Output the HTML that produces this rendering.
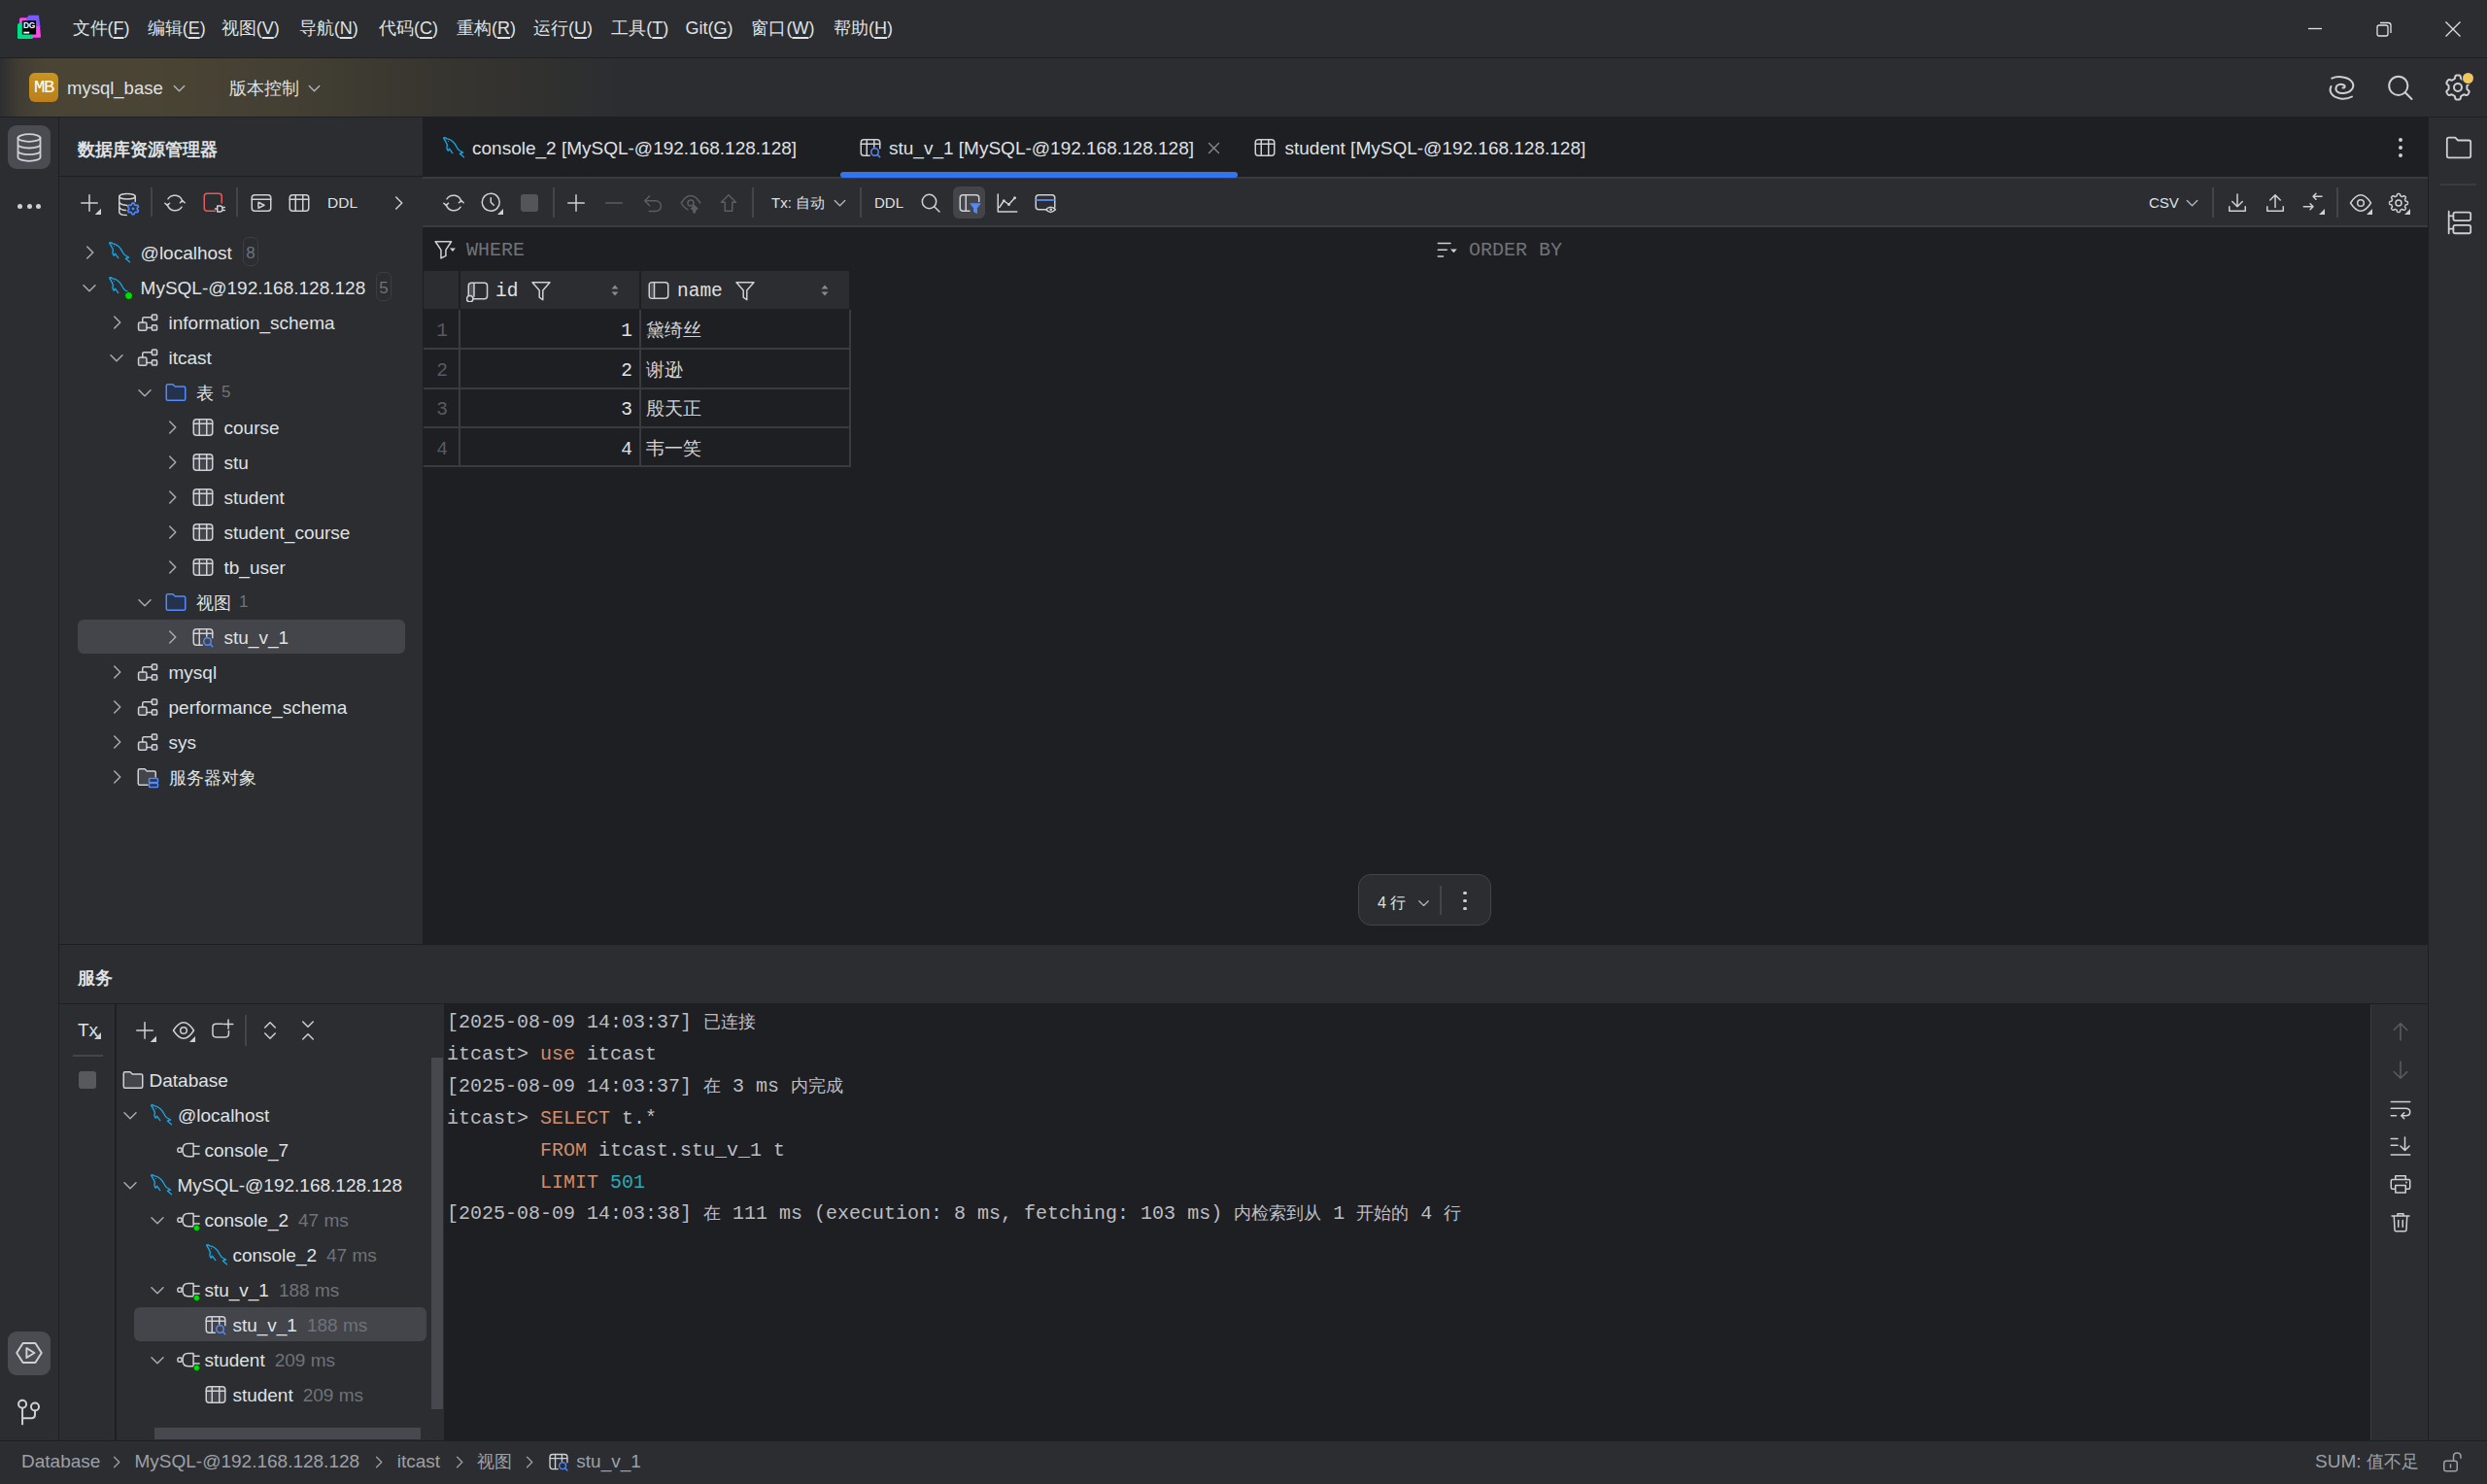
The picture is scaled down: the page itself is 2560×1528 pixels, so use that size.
<!DOCTYPE html><html><head><meta charset="utf-8"><style>html,body{margin:0;padding:0;width:2560px;height:1528px;overflow:hidden;background:#2b2d30;font-family:"Liberation Sans",sans-serif;} u{text-decoration:underline;text-decoration-thickness:1.6px;text-underline-offset:3px}</style></head><body>
<div style="position:absolute;left:0px;top:0px;width:2560px;height:59px;background:#2b2d30;"></div>
<div style="position:absolute;left:0px;top:59px;width:2560px;height:1px;background:#1e1f22;"></div>
<svg style="position:absolute;left:10px;top:8px;" width="40" height="40" viewBox="0 0 40 40" fill="none">
<path d="M11.5 10.2 H17.5 Q19 10.2 19.5 11.5 L21 16 L14 21 L10 21 V11.7 Q10 10.2 11.5 10.2 Z" fill="#ff45ed"/>
<path d="M19.8 7.8 H29.9 L31.5 20 L24 22 L16.5 11.5 Z" fill="#7c59ff"/>
<path d="M23 19 L31 19 L32 29.5 Q32 30.7 30.8 30.7 H24 L20 25 Z" fill="#ff45ed"/>
<path d="M9.5 15.9 H14 L24 28 V30.8 Q24 32 22.8 32 H9.2 Q8 32 8 30.8 V17.4 Q8 15.9 9.5 15.9 Z" fill="#00dd84"/>
<rect x="12.8" y="13.2" width="14.3" height="14.3" fill="#000"/>
<text x="13.9" y="21" font-family="Liberation Sans" font-weight="bold" font-size="8.4" fill="#fff" letter-spacing="-0.3">DG</text>
<rect x="14.3" y="24.7" width="5.9" height="1.8" fill="#fff"/></svg>
<div style="position:absolute;left:74.5px;top:11.0px;line-height:36px;height:36px;font-size:18px;color:#dfe1e5;font-weight:normal;font-family:'Liberation Sans', sans-serif;white-space:pre;">文件(<u>F</u>)</div>
<div style="position:absolute;left:151.7px;top:11.0px;line-height:36px;height:36px;font-size:18px;color:#dfe1e5;font-weight:normal;font-family:'Liberation Sans', sans-serif;white-space:pre;">编辑(<u>E</u>)</div>
<div style="position:absolute;left:227.8px;top:11.0px;line-height:36px;height:36px;font-size:18px;color:#dfe1e5;font-weight:normal;font-family:'Liberation Sans', sans-serif;white-space:pre;">视图(<u>V</u>)</div>
<div style="position:absolute;left:307.7px;top:11.0px;line-height:36px;height:36px;font-size:18px;color:#dfe1e5;font-weight:normal;font-family:'Liberation Sans', sans-serif;white-space:pre;">导航(<u>N</u>)</div>
<div style="position:absolute;left:390px;top:11.0px;line-height:36px;height:36px;font-size:18px;color:#dfe1e5;font-weight:normal;font-family:'Liberation Sans', sans-serif;white-space:pre;">代码(<u>C</u>)</div>
<div style="position:absolute;left:470px;top:11.0px;line-height:36px;height:36px;font-size:18px;color:#dfe1e5;font-weight:normal;font-family:'Liberation Sans', sans-serif;white-space:pre;">重构(<u>R</u>)</div>
<div style="position:absolute;left:549px;top:11.0px;line-height:36px;height:36px;font-size:18px;color:#dfe1e5;font-weight:normal;font-family:'Liberation Sans', sans-serif;white-space:pre;">运行(<u>U</u>)</div>
<div style="position:absolute;left:629.3px;top:11.0px;line-height:36px;height:36px;font-size:18px;color:#dfe1e5;font-weight:normal;font-family:'Liberation Sans', sans-serif;white-space:pre;">工具(<u>T</u>)</div>
<div style="position:absolute;left:705.4px;top:11.0px;line-height:36px;height:36px;font-size:18px;color:#dfe1e5;font-weight:normal;font-family:'Liberation Sans', sans-serif;white-space:pre;">Git(<u>G</u>)</div>
<div style="position:absolute;left:773.4px;top:11.0px;line-height:36px;height:36px;font-size:18px;color:#dfe1e5;font-weight:normal;font-family:'Liberation Sans', sans-serif;white-space:pre;">窗口(<u>W</u>)</div>
<div style="position:absolute;left:858px;top:11.0px;line-height:36px;height:36px;font-size:18px;color:#dfe1e5;font-weight:normal;font-family:'Liberation Sans', sans-serif;white-space:pre;">帮助(<u>H</u>)</div>
<svg style="position:absolute;left:2373px;top:20px;" width="20" height="20" viewBox="0 0 20 20" fill="none"><path d="M3 9.5 H17" stroke="#dfe1e5" stroke-width="1.3"/></svg>
<svg style="position:absolute;left:2443px;top:19px;" width="22" height="22" viewBox="0 0 22 22" fill="none"><rect x="4" y="7" width="11" height="11" rx="2" stroke="#dfe1e5" stroke-width="1.3"/><path d="M7 4.5 H15.5 Q18 4.5 18 7 V15" stroke="#dfe1e5" stroke-width="1.3"/></svg>
<svg style="position:absolute;left:2514px;top:19px;" width="22" height="22" viewBox="0 0 22 22" fill="none"><path d="M3.5 3.5 L18.5 18.5 M18.5 3.5 L3.5 18.5" stroke="#dfe1e5" stroke-width="1.3"/></svg>
<div style="position:absolute;left:0;top:60px;width:2560px;height:60px;background:#2b2d30"></div>
<div style="position:absolute;left:0;top:60px;width:700px;height:60px;background:linear-gradient(90deg, #2d2e30 0px, #3f3c33 18px, #4a4434 45px, #4a4434 150px, #433f33 300px, #37352f 450px, #2b2d30 640px)"></div>
<div style="position:absolute;left:0px;top:120px;width:2560px;height:1px;background:#1e1f22;"></div>
<div style="position:absolute;left:30px;top:75px;width:30px;height:30px;border-radius:6px;background:linear-gradient(180deg,#c9951f,#bb7f1d);color:#fff;font-family:'Liberation Mono',monospace;font-size:19px;line-height:31px;text-align:center;letter-spacing:-1.5px">MB</div>
<div style="position:absolute;left:69px;top:73.0px;line-height:36px;height:36px;font-size:18.5px;color:#dfe1e5;font-weight:normal;font-family:'Liberation Sans', sans-serif;white-space:pre;">mysql_base</div>
<svg style="position:absolute;left:173.5px;top:79.5px;" width="21" height="21" viewBox="0 0 16 16" fill="none"><path d="M4 6.5 L8 10.5 L12 6.5" stroke="#b4b8bf" stroke-width="1" stroke-linecap="round" stroke-linejoin="round"/></svg>
<div style="position:absolute;left:236px;top:73.0px;line-height:36px;height:36px;font-size:18px;color:#dfe1e5;font-weight:normal;font-family:'Liberation Sans', sans-serif;white-space:pre;">版本控制</div>
<svg style="position:absolute;left:312.5px;top:79.5px;" width="21" height="21" viewBox="0 0 16 16" fill="none"><path d="M4 6.5 L8 10.5 L12 6.5" stroke="#b4b8bf" stroke-width="1" stroke-linecap="round" stroke-linejoin="round"/></svg>
<svg style="position:absolute;left:2390px;top:70px;" width="40" height="40" viewBox="0 0 40 40" fill="none"><path d="M10.3 10.6 C16 8 28 8.5 31.5 15 C34 20 30 25.5 22.5 26 C17 26.5 14 24 14.5 20.5 C15 17 19 16 22.5 17.5 C24.5 18.5 24 20.5 21.5 20.5" stroke="#ced0d6" stroke-width="2" stroke-linecap="round" fill="none"/><path d="M9.5 19 C7 24 10 30 19 31.5 C24 32.2 28.5 31 31 29.5" stroke="#ced0d6" stroke-width="2" stroke-linecap="round" fill="none"/></svg>
<svg style="position:absolute;left:2450px;top:70px;" width="40" height="40" viewBox="0 0 40 40" fill="none"><circle cx="18.8" cy="18.3" r="9.6" stroke="#ced0d6" stroke-width="2"/><path d="M25.8 25.3 L32.5 32" stroke="#ced0d6" stroke-width="2" stroke-linecap="round"/></svg>
<svg style="position:absolute;left:2510px;top:70px;" width="40" height="40" viewBox="-2 -2 20 20" fill="none"><path d="M8.00 1.70 L8.25 1.71 L8.49 1.73 L8.74 1.77 L8.97 1.85 L9.19 2.01 L9.35 2.36 L9.45 2.86 L9.54 3.27 L9.66 3.50 L9.81 3.63 L9.97 3.72 L10.14 3.81 L10.30 3.90 L10.46 3.99 L10.61 4.09 L10.77 4.18 L10.94 4.27 L11.14 4.32 L11.44 4.27 L11.89 4.11 L12.35 3.98 L12.68 4.00 L12.91 4.13 L13.08 4.31 L13.23 4.50 L13.37 4.71 L13.50 4.92 L13.61 5.14 L13.71 5.37 L13.79 5.60 L13.82 5.85 L13.73 6.14 L13.44 6.46 L13.05 6.79 L12.80 7.04 L12.71 7.25 L12.69 7.44 L12.69 7.63 L12.70 7.82 L12.70 8.00 L12.70 8.18 L12.69 8.37 L12.69 8.56 L12.71 8.75 L12.80 8.96 L13.05 9.21 L13.44 9.54 L13.73 9.86 L13.82 10.15 L13.79 10.40 L13.71 10.63 L13.61 10.86 L13.50 11.08 L13.37 11.29 L13.23 11.50 L13.08 11.69 L12.91 11.87 L12.68 12.00 L12.35 12.02 L11.89 11.89 L11.44 11.73 L11.14 11.68 L10.94 11.73 L10.77 11.82 L10.61 11.91 L10.46 12.01 L10.30 12.10 L10.14 12.19 L9.97 12.28 L9.81 12.37 L9.66 12.50 L9.54 12.73 L9.45 13.14 L9.35 13.64 L9.19 13.99 L8.97 14.15 L8.74 14.23 L8.49 14.27 L8.25 14.29 L8.00 14.30 L7.75 14.29 L7.51 14.27 L7.26 14.23 L7.03 14.15 L6.81 13.99 L6.65 13.64 L6.55 13.14 L6.46 12.73 L6.34 12.50 L6.19 12.37 L6.03 12.28 L5.86 12.19 L5.70 12.10 L5.54 12.01 L5.39 11.91 L5.23 11.82 L5.06 11.73 L4.86 11.68 L4.56 11.73 L4.11 11.89 L3.65 12.02 L3.32 12.00 L3.09 11.87 L2.92 11.69 L2.77 11.50 L2.63 11.29 L2.50 11.08 L2.39 10.86 L2.29 10.63 L2.21 10.40 L2.18 10.15 L2.27 9.86 L2.56 9.54 L2.95 9.21 L3.20 8.96 L3.29 8.75 L3.31 8.56 L3.31 8.37 L3.30 8.18 L3.30 8.00 L3.30 7.82 L3.31 7.63 L3.31 7.44 L3.29 7.25 L3.20 7.04 L2.95 6.79 L2.56 6.46 L2.27 6.14 L2.18 5.85 L2.21 5.60 L2.29 5.37 L2.39 5.14 L2.50 4.92 L2.63 4.71 L2.77 4.50 L2.92 4.31 L3.09 4.13 L3.32 4.00 L3.65 3.98 L4.11 4.11 L4.56 4.27 L4.86 4.32 L5.06 4.27 L5.23 4.18 L5.39 4.09 L5.54 3.99 L5.70 3.90 L5.86 3.81 L6.03 3.72 L6.19 3.63 L6.34 3.50 L6.46 3.27 L6.55 2.86 L6.65 2.36 L6.81 2.01 L7.03 1.85 L7.26 1.77 L7.51 1.73 L7.75 1.71 Z" stroke="#ced0d6" stroke-width="1.0" stroke-linecap="round" stroke-linejoin="round"/><circle cx="8" cy="8" r="2.0" stroke="#ced0d6" stroke-width="1.0" stroke-linecap="round" stroke-linejoin="round"/></svg>
<div style="position:absolute;left:2533.5px;top:73.5px;width:13.6px;height:13.6px;border-radius:8px;background:#2b2d30"></div>
<div style="position:absolute;left:2535px;top:75px;width:10.6px;height:10.6px;border-radius:6px;background:#f2c55c"></div>
<div style="position:absolute;left:60px;top:121px;width:1px;height:1362px;background:#1e1f22;"></div>
<div style="position:absolute;left:8px;top:129px;width:44px;height:45px;background:#4b4c51;border-radius:9px"></div>
<svg style="position:absolute;left:16px;top:136px;" width="28" height="32" viewBox="0 0 28 32" fill="none"><ellipse cx="14" cy="6" rx="11.5" ry="3.8" stroke="#ced0d6" stroke-width="1.8" stroke-linecap="round" stroke-linejoin="round"/><path d="M2.5 6 V26 M25.5 6 V26 M2.5 12.7 A11.5 3.8 0 0 0 25.5 12.7 M2.5 19.4 A11.5 3.8 0 0 0 25.5 19.4 M2.5 26 A11.5 3.8 0 0 0 25.5 26" stroke="#ced0d6" stroke-width="1.8" stroke-linecap="round" stroke-linejoin="round"/></svg>
<div style="position:absolute;left:17.7px;top:209.5px;width:5px;height:5px;border-radius:3px;background:#ced0d6"></div>
<div style="position:absolute;left:27.5px;top:209.5px;width:5px;height:5px;border-radius:3px;background:#ced0d6"></div>
<div style="position:absolute;left:37.1px;top:209.5px;width:5px;height:5px;border-radius:3px;background:#ced0d6"></div>
<div style="position:absolute;left:8px;top:1371px;width:44px;height:45px;background:#4b4c51;border-radius:9px"></div>
<svg style="position:absolute;left:15.0px;top:1378.0px;" width="30" height="30" viewBox="0 0 16 16" fill="none"><path d="M4.6 2.7 H11.4 L14.8 8 L11.4 13.3 H4.6 L1.2 8 Z" stroke="#ced0d6" stroke-width="1.05" stroke-linecap="round" stroke-linejoin="round"/><path d="M6.6 5.4 L10.9 8 L6.6 10.6 Z" stroke="#ced0d6" stroke-width="1.05" stroke-linecap="round" stroke-linejoin="round"/></svg>
<svg style="position:absolute;left:15.0px;top:1439.0px;" width="30" height="30" viewBox="0 0 16 16" fill="none"><circle cx="4.3" cy="3.6" r="2.15" stroke="#ced0d6" stroke-width="1.05" stroke-linecap="round" stroke-linejoin="round"/><circle cx="11.2" cy="5.1" r="2.15" stroke="#ced0d6" stroke-width="1.05" stroke-linecap="round" stroke-linejoin="round"/><path d="M4.3 5.75 V14.6 M4.3 11.3 H9.2 Q11.2 11.3 11.2 9.3 V7.25" stroke="#ced0d6" stroke-width="1.05" stroke-linecap="round" stroke-linejoin="round"/></svg>
<div style="position:absolute;left:61px;top:181px;width:374px;height:1px;background:#1e1f22;"></div>
<div style="position:absolute;left:80px;top:135.5px;line-height:36px;height:36px;font-size:18px;color:#dfe1e5;font-weight:bold;font-family:'Liberation Sans', sans-serif;white-space:pre;">数据库资源管理器</div>
<svg style="position:absolute;left:79.5px;top:197.0px;" width="24" height="24" viewBox="0 0 16 16" fill="none"><path d="M8 2.5 V13.5 M2.5 8 H13.5" stroke="#ced0d6" stroke-width="1" stroke-linecap="round" stroke-linejoin="round"/><path d="M16 11.8 V16 H11.8 Z" fill="#ced0d6"/></svg>
<svg style="position:absolute;left:120.0px;top:197.0px;overflow:visible" width="24" height="24" viewBox="0 0 16 16" fill="none"><ellipse cx="7.33" cy="3.5" rx="5.5" ry="1.9" stroke="#ced0d6" stroke-width="1" stroke-linecap="round" stroke-linejoin="round"/><path d="M1.83 3.5 V14.5 M12.83 3.5 V7 M1.83 7.3 Q2.5 9.2 7.3 9.6 M1.83 10.8 Q2.5 12.7 6.3 13 M1.83 14.5 Q2.5 16.3 6.8 16.4" stroke="#ced0d6" stroke-width="1" stroke-linecap="round" stroke-linejoin="round"/><path d="M11.33 8.03 L11.53 8.04 L11.74 8.07 L11.93 8.14 L12.10 8.31 L12.21 8.65 L12.29 8.98 L12.39 9.17 L12.52 9.27 L12.65 9.34 L12.78 9.42 L12.91 9.50 L13.04 9.57 L13.19 9.63 L13.40 9.63 L13.73 9.53 L14.08 9.45 L14.31 9.51 L14.47 9.65 L14.60 9.81 L14.71 9.98 L14.80 10.16 L14.88 10.35 L14.92 10.55 L14.85 10.79 L14.61 11.05 L14.36 11.29 L14.25 11.47 L14.23 11.63 L14.23 11.78 L14.23 11.93 L14.23 12.08 L14.23 12.23 L14.25 12.39 L14.36 12.57 L14.61 12.81 L14.85 13.07 L14.92 13.31 L14.88 13.51 L14.80 13.70 L14.71 13.88 L14.60 14.05 L14.47 14.21 L14.31 14.35 L14.08 14.41 L13.73 14.33 L13.40 14.23 L13.19 14.23 L13.04 14.29 L12.91 14.36 L12.78 14.44 L12.65 14.52 L12.52 14.59 L12.39 14.69 L12.29 14.88 L12.21 15.21 L12.10 15.55 L11.93 15.72 L11.74 15.79 L11.53 15.82 L11.33 15.83 L11.13 15.82 L10.92 15.79 L10.73 15.72 L10.56 15.55 L10.45 15.21 L10.37 14.88 L10.27 14.69 L10.14 14.59 L10.01 14.52 L9.88 14.44 L9.75 14.36 L9.62 14.29 L9.47 14.23 L9.26 14.23 L8.93 14.33 L8.58 14.41 L8.35 14.35 L8.19 14.21 L8.06 14.05 L7.95 13.88 L7.86 13.70 L7.78 13.51 L7.74 13.31 L7.81 13.07 L8.05 12.81 L8.30 12.57 L8.41 12.39 L8.43 12.23 L8.43 12.08 L8.43 11.93 L8.43 11.78 L8.43 11.63 L8.41 11.47 L8.30 11.29 L8.05 11.05 L7.81 10.79 L7.74 10.55 L7.78 10.35 L7.86 10.16 L7.95 9.98 L8.06 9.81 L8.19 9.65 L8.35 9.51 L8.58 9.45 L8.93 9.53 L9.26 9.63 L9.47 9.63 L9.62 9.57 L9.75 9.50 L9.88 9.42 L10.01 9.34 L10.14 9.27 L10.27 9.17 L10.37 8.98 L10.45 8.65 L10.56 8.31 L10.73 8.14 L10.92 8.07 L11.13 8.04 Z" fill="#25324d" stroke="#548af7" stroke-width="1.1" stroke-linejoin="round"/><circle cx="11.33" cy="11.93" r="0.9" fill="#548af7"/></svg>
<div style="position:absolute;left:155px;top:193px;width:2px;height:30px;background:#43454a;"></div>
<svg style="position:absolute;left:168.0px;top:197.0px;" width="24" height="24" viewBox="0 0 16 16" fill="none"><path d="M13.2 7 A5.5 5.5 0 0 0 3.3 5.2 M2.8 9 A5.5 5.5 0 0 0 12.7 10.8" stroke="#ced0d6" stroke-width="1" stroke-linecap="round" stroke-linejoin="round"/><path d="M1.2 8.2 L2.8 9.6 L4.4 8.2 M11.6 7.8 L13.2 6.4 L14.8 7.8" stroke="#ced0d6" stroke-width="1" stroke-linecap="round" stroke-linejoin="round"/></svg>
<svg style="position:absolute;left:208.0px;top:197.0px;" width="24" height="24" viewBox="0 0 16 16" fill="none"><path d="M9 13.5 H3.5 Q1.5 13.5 1.5 11.5 V3.5 Q1.5 1.5 3.5 1.5 H11.5 Q13.5 1.5 13.5 3.5 V8" stroke="#e55b5b" stroke-width="1" stroke-linecap="round"/><path d="M10.5 10 H12.5 Q14 10 14 12 Q14 14 12.5 14 H10.5 Z M9 12 H10.5 M14 11 H15.5 M14 13 H15.5" stroke="#ced0d6" stroke-width="1" stroke-linecap="round" stroke-linejoin="round"/></svg>
<div style="position:absolute;left:243px;top:193px;width:2px;height:30px;background:#43454a;"></div>
<svg style="position:absolute;left:257.0px;top:197.0px;" width="24" height="24" viewBox="0 0 16 16" fill="none"><rect x="1.5" y="2.5" width="13" height="11" rx="2" stroke="#ced0d6" stroke-width="1" stroke-linecap="round" stroke-linejoin="round"/><path d="M1.5 5.5 H14.5" stroke="#ced0d6" stroke-width="1" stroke-linecap="round" stroke-linejoin="round"/><path d="M6 7.5 L10 9.5 L6 11.5 Z" stroke="#ced0d6" stroke-width="1" stroke-linecap="round" stroke-linejoin="round"/></svg>
<svg style="position:absolute;left:296.0px;top:197.0px;" width="24" height="24" viewBox="0 0 16 16" fill="none"><rect x="1.5" y="2.5" width="13" height="11" rx="2" fill="none" stroke="#ced0d6" stroke-width="1" stroke-linecap="round" stroke-linejoin="round"/><path d="M1.5 5.5 H14.5 M5.5 2.5 V13.5 M10.5 2.5 V13.5" stroke="#ced0d6" stroke-width="1" stroke-linecap="round" stroke-linejoin="round"/></svg>
<div style="position:absolute;left:337px;top:191.0px;line-height:36px;height:36px;font-size:15.5px;color:#dfe1e5;font-weight:normal;font-family:'Liberation Sans', sans-serif;white-space:pre;">DDL</div>
<svg style="position:absolute;left:398.0px;top:197.0px;" width="24" height="24" viewBox="0 0 16 16" fill="none"><path d="M6.5 4 L10.5 8 L6.5 12" stroke="#ced0d6" stroke-width="1" stroke-linecap="round" stroke-linejoin="round"/></svg>
<div style="position:absolute;left:80px;top:638px;width:337px;height:35px;background:#43454a;border-radius:6px"></div>
<svg style="position:absolute;left:79.5px;top:248.0px;" width="24" height="24" viewBox="0 0 16 16" fill="none"><path d="M6.5 4 L10.5 8 L6.5 12" stroke="#a8abb0" stroke-width="1" stroke-linecap="round" stroke-linejoin="round"/></svg>
<svg style="position:absolute;left:108.0px;top:244px;" width="30" height="30" viewBox="0 0 30 30" fill="none"><path d="M13.75 21.6 L10.5 17.2 L9.3 19.2 C8 18 7.6 16 8.4 13.2 C7.5 11 6.4 9 4.6 6.1 C5.5 5.3 6.5 5.6 8 6.8 C11 7.2 14 9 16.4 12.3 C18 15 18.5 17.5 21 19 C22.5 19.8 24 20.4 24.6 21.2 L21.4 22.2 L25.5 25.7" stroke="#12a9e9" stroke-width="1.35" stroke-linejoin="round" stroke-linecap="round" fill="none"/><circle cx="9.5" cy="9.5" r="0.6" fill="#12a9e9"/></svg>
<div style="position:absolute;left:144.6px;top:243.0px;line-height:36px;height:36px;font-size:19px;color:#dfe1e5;font-weight:normal;font-family:'Liberation Sans', sans-serif;white-space:pre;">@localhost</div>
<div style="position:absolute;left:250px;top:244px;width:14px;height:28px;border:1.5px solid #3c3e43;border-radius:6px;color:#6f737a;font-size:17px;line-height:31px;text-align:center">8</div>
<svg style="position:absolute;left:79.5px;top:284.0px;" width="24" height="24" viewBox="0 0 16 16" fill="none"><path d="M4 6.5 L8 10.5 L12 6.5" stroke="#a8abb0" stroke-width="1" stroke-linecap="round" stroke-linejoin="round"/></svg>
<svg style="position:absolute;left:108.0px;top:280px;" width="30" height="30" viewBox="0 0 30 30" fill="none"><path d="M13.75 21.6 L10.5 17.2 L9.3 19.2 C8 18 7.6 16 8.4 13.2 C7.5 11 6.4 9 4.6 6.1 C5.5 5.3 6.5 5.6 8 6.8 C11 7.2 14 9 16.4 12.3 C18 15 18.5 17.5 21 19 C22.5 19.8 24 20.4 24.6 21.2 L21.4 22.2 L25.5 25.7" stroke="#12a9e9" stroke-width="1.35" stroke-linejoin="round" stroke-linecap="round" fill="none"/><circle cx="9.5" cy="9.5" r="0.6" fill="#12a9e9"/></svg>
<div style="position:absolute;left:127.89999999999999px;top:300.2px;width:7px;height:7px;border-radius:5px;background:#00e000;border:0.7px solid #1b2a1b"></div>
<div style="position:absolute;left:144.6px;top:279.0px;line-height:36px;height:36px;font-size:19px;color:#dfe1e5;font-weight:normal;font-family:'Liberation Sans', sans-serif;white-space:pre;">MySQL-@192.168.128.128</div>
<div style="position:absolute;left:387px;top:280px;width:14px;height:28px;border:1.5px solid #3c3e43;border-radius:6px;color:#6f737a;font-size:17px;line-height:31px;text-align:center">5</div>
<svg style="position:absolute;left:108.0px;top:320.0px;" width="24" height="24" viewBox="0 0 16 16" fill="none"><path d="M6.5 4 L10.5 8 L6.5 12" stroke="#a8abb0" stroke-width="1" stroke-linecap="round" stroke-linejoin="round"/></svg>
<svg style="position:absolute;left:140.0px;top:320.0px;" width="24" height="24" viewBox="0 0 16 16" fill="none"><rect x="1.7" y="8" width="5.6" height="5.5" rx="1" fill="#43454a" stroke="#ced0d6" stroke-width="1" stroke-linecap="round" stroke-linejoin="round"/><rect x="10.9" y="2.6" width="3.5" height="3.7" rx="0.8" fill="#43454a" stroke="#ced0d6" stroke-width="1" stroke-linecap="round" stroke-linejoin="round"/><rect x="10.9" y="9.8" width="3.5" height="3.6" rx="0.8" fill="#43454a" stroke="#ced0d6" stroke-width="1" stroke-linecap="round" stroke-linejoin="round"/><path d="M4.5 8 V5.5 Q4.5 4.45 5.5 4.45 H10.9 M7.3 11.6 H10.9" stroke="#ced0d6" stroke-width="1" stroke-linecap="round" stroke-linejoin="round"/></svg>
<div style="position:absolute;left:173.5px;top:315.0px;line-height:36px;height:36px;font-size:19px;color:#dfe1e5;font-weight:normal;font-family:'Liberation Sans', sans-serif;white-space:pre;">information_schema</div>
<svg style="position:absolute;left:108.0px;top:356.0px;" width="24" height="24" viewBox="0 0 16 16" fill="none"><path d="M4 6.5 L8 10.5 L12 6.5" stroke="#a8abb0" stroke-width="1" stroke-linecap="round" stroke-linejoin="round"/></svg>
<svg style="position:absolute;left:140.0px;top:356.0px;" width="24" height="24" viewBox="0 0 16 16" fill="none"><rect x="1.7" y="8" width="5.6" height="5.5" rx="1" fill="#43454a" stroke="#ced0d6" stroke-width="1" stroke-linecap="round" stroke-linejoin="round"/><rect x="10.9" y="2.6" width="3.5" height="3.7" rx="0.8" fill="#43454a" stroke="#ced0d6" stroke-width="1" stroke-linecap="round" stroke-linejoin="round"/><rect x="10.9" y="9.8" width="3.5" height="3.6" rx="0.8" fill="#43454a" stroke="#ced0d6" stroke-width="1" stroke-linecap="round" stroke-linejoin="round"/><path d="M4.5 8 V5.5 Q4.5 4.45 5.5 4.45 H10.9 M7.3 11.6 H10.9" stroke="#ced0d6" stroke-width="1" stroke-linecap="round" stroke-linejoin="round"/></svg>
<div style="position:absolute;left:173.5px;top:351.0px;line-height:36px;height:36px;font-size:19px;color:#dfe1e5;font-weight:normal;font-family:'Liberation Sans', sans-serif;white-space:pre;">itcast</div>
<svg style="position:absolute;left:136.5px;top:392.0px;" width="24" height="24" viewBox="0 0 16 16" fill="none"><path d="M4 6.5 L8 10.5 L12 6.5" stroke="#a8abb0" stroke-width="1" stroke-linecap="round" stroke-linejoin="round"/></svg>
<svg style="position:absolute;left:168.5px;top:392.0px;" width="24" height="24" viewBox="0 0 16 16" fill="none"><path d="M1.5 3.5 Q1.5 2.5 2.5 2.5 H6 L7.5 4 H13.5 Q14.5 4 14.5 5 V12.5 Q14.5 13.5 13.5 13.5 H2.5 Q1.5 13.5 1.5 12.5 Z" fill="#25324d" stroke="#548af7" stroke-width="1" stroke-linejoin="round"/></svg>
<div style="position:absolute;left:201.5px;top:387.0px;line-height:36px;height:36px;font-size:18px;color:#dfe1e5;font-weight:normal;font-family:'Liberation Sans', sans-serif;white-space:pre;">表</div>
<div style="position:absolute;left:228px;top:386.0px;line-height:36px;height:36px;font-size:17px;color:#6f737a;font-weight:normal;font-family:'Liberation Sans', sans-serif;white-space:pre;">5</div>
<svg style="position:absolute;left:165.0px;top:428.0px;" width="24" height="24" viewBox="0 0 16 16" fill="none"><path d="M6.5 4 L10.5 8 L6.5 12" stroke="#a8abb0" stroke-width="1" stroke-linecap="round" stroke-linejoin="round"/></svg>
<svg style="position:absolute;left:197.0px;top:428.0px;" width="24" height="24" viewBox="0 0 16 16" fill="none"><rect x="1.5" y="2.5" width="13" height="11" rx="2" fill="#43454a" stroke="#ced0d6" stroke-width="1" stroke-linecap="round" stroke-linejoin="round"/><path d="M1.5 5.5 H14.5 M5.5 2.5 V13.5 M10.5 2.5 V13.5" stroke="#ced0d6" stroke-width="1" stroke-linecap="round" stroke-linejoin="round"/></svg>
<div style="position:absolute;left:230.5px;top:423.0px;line-height:36px;height:36px;font-size:19px;color:#dfe1e5;font-weight:normal;font-family:'Liberation Sans', sans-serif;white-space:pre;">course</div>
<svg style="position:absolute;left:165.0px;top:464.0px;" width="24" height="24" viewBox="0 0 16 16" fill="none"><path d="M6.5 4 L10.5 8 L6.5 12" stroke="#a8abb0" stroke-width="1" stroke-linecap="round" stroke-linejoin="round"/></svg>
<svg style="position:absolute;left:197.0px;top:464.0px;" width="24" height="24" viewBox="0 0 16 16" fill="none"><rect x="1.5" y="2.5" width="13" height="11" rx="2" fill="#43454a" stroke="#ced0d6" stroke-width="1" stroke-linecap="round" stroke-linejoin="round"/><path d="M1.5 5.5 H14.5 M5.5 2.5 V13.5 M10.5 2.5 V13.5" stroke="#ced0d6" stroke-width="1" stroke-linecap="round" stroke-linejoin="round"/></svg>
<div style="position:absolute;left:230.5px;top:459.0px;line-height:36px;height:36px;font-size:19px;color:#dfe1e5;font-weight:normal;font-family:'Liberation Sans', sans-serif;white-space:pre;">stu</div>
<svg style="position:absolute;left:165.0px;top:500.0px;" width="24" height="24" viewBox="0 0 16 16" fill="none"><path d="M6.5 4 L10.5 8 L6.5 12" stroke="#a8abb0" stroke-width="1" stroke-linecap="round" stroke-linejoin="round"/></svg>
<svg style="position:absolute;left:197.0px;top:500.0px;" width="24" height="24" viewBox="0 0 16 16" fill="none"><rect x="1.5" y="2.5" width="13" height="11" rx="2" fill="#43454a" stroke="#ced0d6" stroke-width="1" stroke-linecap="round" stroke-linejoin="round"/><path d="M1.5 5.5 H14.5 M5.5 2.5 V13.5 M10.5 2.5 V13.5" stroke="#ced0d6" stroke-width="1" stroke-linecap="round" stroke-linejoin="round"/></svg>
<div style="position:absolute;left:230.5px;top:495.0px;line-height:36px;height:36px;font-size:19px;color:#dfe1e5;font-weight:normal;font-family:'Liberation Sans', sans-serif;white-space:pre;">student</div>
<svg style="position:absolute;left:165.0px;top:536.0px;" width="24" height="24" viewBox="0 0 16 16" fill="none"><path d="M6.5 4 L10.5 8 L6.5 12" stroke="#a8abb0" stroke-width="1" stroke-linecap="round" stroke-linejoin="round"/></svg>
<svg style="position:absolute;left:197.0px;top:536.0px;" width="24" height="24" viewBox="0 0 16 16" fill="none"><rect x="1.5" y="2.5" width="13" height="11" rx="2" fill="#43454a" stroke="#ced0d6" stroke-width="1" stroke-linecap="round" stroke-linejoin="round"/><path d="M1.5 5.5 H14.5 M5.5 2.5 V13.5 M10.5 2.5 V13.5" stroke="#ced0d6" stroke-width="1" stroke-linecap="round" stroke-linejoin="round"/></svg>
<div style="position:absolute;left:230.5px;top:531.0px;line-height:36px;height:36px;font-size:19px;color:#dfe1e5;font-weight:normal;font-family:'Liberation Sans', sans-serif;white-space:pre;">student_course</div>
<svg style="position:absolute;left:165.0px;top:572.0px;" width="24" height="24" viewBox="0 0 16 16" fill="none"><path d="M6.5 4 L10.5 8 L6.5 12" stroke="#a8abb0" stroke-width="1" stroke-linecap="round" stroke-linejoin="round"/></svg>
<svg style="position:absolute;left:197.0px;top:572.0px;" width="24" height="24" viewBox="0 0 16 16" fill="none"><rect x="1.5" y="2.5" width="13" height="11" rx="2" fill="#43454a" stroke="#ced0d6" stroke-width="1" stroke-linecap="round" stroke-linejoin="round"/><path d="M1.5 5.5 H14.5 M5.5 2.5 V13.5 M10.5 2.5 V13.5" stroke="#ced0d6" stroke-width="1" stroke-linecap="round" stroke-linejoin="round"/></svg>
<div style="position:absolute;left:230.5px;top:567.0px;line-height:36px;height:36px;font-size:19px;color:#dfe1e5;font-weight:normal;font-family:'Liberation Sans', sans-serif;white-space:pre;">tb_user</div>
<svg style="position:absolute;left:136.5px;top:608.0px;" width="24" height="24" viewBox="0 0 16 16" fill="none"><path d="M4 6.5 L8 10.5 L12 6.5" stroke="#a8abb0" stroke-width="1" stroke-linecap="round" stroke-linejoin="round"/></svg>
<svg style="position:absolute;left:168.5px;top:608.0px;" width="24" height="24" viewBox="0 0 16 16" fill="none"><path d="M1.5 3.5 Q1.5 2.5 2.5 2.5 H6 L7.5 4 H13.5 Q14.5 4 14.5 5 V12.5 Q14.5 13.5 13.5 13.5 H2.5 Q1.5 13.5 1.5 12.5 Z" fill="#25324d" stroke="#548af7" stroke-width="1" stroke-linejoin="round"/></svg>
<div style="position:absolute;left:201.5px;top:603.0px;line-height:36px;height:36px;font-size:18px;color:#dfe1e5;font-weight:normal;font-family:'Liberation Sans', sans-serif;white-space:pre;">视图</div>
<div style="position:absolute;left:246px;top:602.0px;line-height:36px;height:36px;font-size:17px;color:#6f737a;font-weight:normal;font-family:'Liberation Sans', sans-serif;white-space:pre;">1</div>
<svg style="position:absolute;left:165.0px;top:644.0px;" width="24" height="24" viewBox="0 0 16 16" fill="none"><path d="M6.5 4 L10.5 8 L6.5 12" stroke="#a8abb0" stroke-width="1" stroke-linecap="round" stroke-linejoin="round"/></svg>
<svg style="position:absolute;left:197.0px;top:644.0px;" width="24" height="24" viewBox="0 0 16 16" fill="none"><path d="M7.5 13.5 H3.5 Q1.5 13.5 1.5 11.5 V4.5 Q1.5 2.5 3.5 2.5 H12.5 Q14.5 2.5 14.5 4.5 V8.5" fill="#43454a" stroke="#ced0d6" stroke-width="1" stroke-linecap="round" stroke-linejoin="round"/><path d="M1.5 5.5 H14.5 M5.5 2.5 V13.5 M10.5 2.5 V7.5" stroke="#ced0d6" stroke-width="1" stroke-linecap="round" stroke-linejoin="round"/><circle cx="11" cy="11" r="2.5" fill="#43454a" stroke="#548af7" stroke-width="1"/><path d="M12.9 12.9 L14.5 14.5" stroke="#548af7" stroke-width="1" stroke-linecap="round"/></svg>
<div style="position:absolute;left:230.5px;top:639.0px;line-height:36px;height:36px;font-size:19px;color:#dfe1e5;font-weight:normal;font-family:'Liberation Sans', sans-serif;white-space:pre;">stu_v_1</div>
<svg style="position:absolute;left:108.0px;top:680.0px;" width="24" height="24" viewBox="0 0 16 16" fill="none"><path d="M6.5 4 L10.5 8 L6.5 12" stroke="#a8abb0" stroke-width="1" stroke-linecap="round" stroke-linejoin="round"/></svg>
<svg style="position:absolute;left:140.0px;top:680.0px;" width="24" height="24" viewBox="0 0 16 16" fill="none"><rect x="1.7" y="8" width="5.6" height="5.5" rx="1" fill="#43454a" stroke="#ced0d6" stroke-width="1" stroke-linecap="round" stroke-linejoin="round"/><rect x="10.9" y="2.6" width="3.5" height="3.7" rx="0.8" fill="#43454a" stroke="#ced0d6" stroke-width="1" stroke-linecap="round" stroke-linejoin="round"/><rect x="10.9" y="9.8" width="3.5" height="3.6" rx="0.8" fill="#43454a" stroke="#ced0d6" stroke-width="1" stroke-linecap="round" stroke-linejoin="round"/><path d="M4.5 8 V5.5 Q4.5 4.45 5.5 4.45 H10.9 M7.3 11.6 H10.9" stroke="#ced0d6" stroke-width="1" stroke-linecap="round" stroke-linejoin="round"/></svg>
<div style="position:absolute;left:173.5px;top:675.0px;line-height:36px;height:36px;font-size:19px;color:#dfe1e5;font-weight:normal;font-family:'Liberation Sans', sans-serif;white-space:pre;">mysql</div>
<svg style="position:absolute;left:108.0px;top:716.0px;" width="24" height="24" viewBox="0 0 16 16" fill="none"><path d="M6.5 4 L10.5 8 L6.5 12" stroke="#a8abb0" stroke-width="1" stroke-linecap="round" stroke-linejoin="round"/></svg>
<svg style="position:absolute;left:140.0px;top:716.0px;" width="24" height="24" viewBox="0 0 16 16" fill="none"><rect x="1.7" y="8" width="5.6" height="5.5" rx="1" fill="#43454a" stroke="#ced0d6" stroke-width="1" stroke-linecap="round" stroke-linejoin="round"/><rect x="10.9" y="2.6" width="3.5" height="3.7" rx="0.8" fill="#43454a" stroke="#ced0d6" stroke-width="1" stroke-linecap="round" stroke-linejoin="round"/><rect x="10.9" y="9.8" width="3.5" height="3.6" rx="0.8" fill="#43454a" stroke="#ced0d6" stroke-width="1" stroke-linecap="round" stroke-linejoin="round"/><path d="M4.5 8 V5.5 Q4.5 4.45 5.5 4.45 H10.9 M7.3 11.6 H10.9" stroke="#ced0d6" stroke-width="1" stroke-linecap="round" stroke-linejoin="round"/></svg>
<div style="position:absolute;left:173.5px;top:711.0px;line-height:36px;height:36px;font-size:19px;color:#dfe1e5;font-weight:normal;font-family:'Liberation Sans', sans-serif;white-space:pre;">performance_schema</div>
<svg style="position:absolute;left:108.0px;top:752.0px;" width="24" height="24" viewBox="0 0 16 16" fill="none"><path d="M6.5 4 L10.5 8 L6.5 12" stroke="#a8abb0" stroke-width="1" stroke-linecap="round" stroke-linejoin="round"/></svg>
<svg style="position:absolute;left:140.0px;top:752.0px;" width="24" height="24" viewBox="0 0 16 16" fill="none"><rect x="1.7" y="8" width="5.6" height="5.5" rx="1" fill="#43454a" stroke="#ced0d6" stroke-width="1" stroke-linecap="round" stroke-linejoin="round"/><rect x="10.9" y="2.6" width="3.5" height="3.7" rx="0.8" fill="#43454a" stroke="#ced0d6" stroke-width="1" stroke-linecap="round" stroke-linejoin="round"/><rect x="10.9" y="9.8" width="3.5" height="3.6" rx="0.8" fill="#43454a" stroke="#ced0d6" stroke-width="1" stroke-linecap="round" stroke-linejoin="round"/><path d="M4.5 8 V5.5 Q4.5 4.45 5.5 4.45 H10.9 M7.3 11.6 H10.9" stroke="#ced0d6" stroke-width="1" stroke-linecap="round" stroke-linejoin="round"/></svg>
<div style="position:absolute;left:173.5px;top:747.0px;line-height:36px;height:36px;font-size:19px;color:#dfe1e5;font-weight:normal;font-family:'Liberation Sans', sans-serif;white-space:pre;">sys</div>
<svg style="position:absolute;left:108.0px;top:788.0px;" width="24" height="24" viewBox="0 0 16 16" fill="none"><path d="M6.5 4 L10.5 8 L6.5 12" stroke="#a8abb0" stroke-width="1" stroke-linecap="round" stroke-linejoin="round"/></svg>
<svg style="position:absolute;left:140.0px;top:788.0px;" width="24" height="24" viewBox="0 0 16 16" fill="none"><path d="M8 13.5 H2.5 Q1.5 13.5 1.5 12.5 V3.5 Q1.5 2.5 2.5 2.5 H6 L7.5 4 H12.5 Q13.5 4 13.5 5 V8" fill="#43454a" stroke="#ced0d6" stroke-width="1" stroke-linecap="round" stroke-linejoin="round"/><rect x="9" y="9" width="6" height="2.6" rx="0.5" fill="#25324d" stroke="#548af7" stroke-width="1"/><rect x="9" y="12.4" width="6" height="2.6" rx="0.5" fill="#25324d" stroke="#548af7" stroke-width="1"/></svg>
<div style="position:absolute;left:173.5px;top:783.0px;line-height:36px;height:36px;font-size:18px;color:#dfe1e5;font-weight:normal;font-family:'Liberation Sans', sans-serif;white-space:pre;">服务器对象</div>
<div style="position:absolute;left:435px;top:121px;width:2065px;height:852px;background:#1e1f22;"></div>
<div style="position:absolute;left:435px;top:182px;width:2065px;height:2px;background:#393b40;"></div>
<div style="position:absolute;left:435px;top:184px;width:2065px;height:48px;background:#2b2d30;"></div>
<div style="position:absolute;left:435px;top:232px;width:2065px;height:2px;background:#393b40;"></div>
<svg style="position:absolute;left:451.5px;top:136px;" width="30" height="30" viewBox="0 0 30 30" fill="none"><path d="M13.75 21.6 L10.5 17.2 L9.3 19.2 C8 18 7.6 16 8.4 13.2 C7.5 11 6.4 9 4.6 6.1 C5.5 5.3 6.5 5.6 8 6.8 C11 7.2 14 9 16.4 12.3 C18 15 18.5 17.5 21 19 C22.5 19.8 24 20.4 24.6 21.2 L21.4 22.2 L25.5 25.7" stroke="#12a9e9" stroke-width="1.35" stroke-linejoin="round" stroke-linecap="round" fill="none"/><circle cx="9.5" cy="9.5" r="0.6" fill="#12a9e9"/></svg>
<div style="position:absolute;left:486px;top:135.0px;line-height:36px;height:36px;font-size:19px;color:#dfe1e5;font-weight:normal;font-family:'Liberation Sans', sans-serif;white-space:pre;">console_2 [MySQL-@192.168.128.128]</div>
<svg style="position:absolute;left:884.0px;top:140.0px;" width="24" height="24" viewBox="0 0 16 16" fill="none"><path d="M7.5 13.5 H3.5 Q1.5 13.5 1.5 11.5 V4.5 Q1.5 2.5 3.5 2.5 H12.5 Q14.5 2.5 14.5 4.5 V8.5" fill="none" stroke="#ced0d6" stroke-width="1" stroke-linecap="round" stroke-linejoin="round"/><path d="M1.5 5.5 H14.5 M5.5 2.5 V13.5 M10.5 2.5 V7.5" stroke="#ced0d6" stroke-width="1" stroke-linecap="round" stroke-linejoin="round"/><circle cx="11" cy="11" r="2.5" fill="none" stroke="#548af7" stroke-width="1"/><path d="M12.9 12.9 L14.5 14.5" stroke="#548af7" stroke-width="1" stroke-linecap="round"/></svg>
<div style="position:absolute;left:915px;top:135.0px;line-height:36px;height:36px;font-size:19px;color:#dfe1e5;font-weight:normal;font-family:'Liberation Sans', sans-serif;white-space:pre;">stu_v_1 [MySQL-@192.168.128.128]</div>
<svg style="position:absolute;left:1240px;top:143px;" width="19" height="19" viewBox="0 0 19 19" fill="none"><path d="M4.5 4.5 L14.5 14.5 M14.5 4.5 L4.5 14.5" stroke="#868a91" stroke-width="1.4" stroke-linecap="round"/></svg>
<div style="position:absolute;left:865px;top:177px;width:409px;height:6px;background:#3574f0;border-radius:3px"></div>
<svg style="position:absolute;left:1290.0px;top:140.0px;" width="24" height="24" viewBox="0 0 16 16" fill="none"><rect x="1.5" y="2.5" width="13" height="11" rx="2" fill="none" stroke="#ced0d6" stroke-width="1" stroke-linecap="round" stroke-linejoin="round"/><path d="M1.5 5.5 H14.5 M5.5 2.5 V13.5 M10.5 2.5 V13.5" stroke="#ced0d6" stroke-width="1" stroke-linecap="round" stroke-linejoin="round"/></svg>
<div style="position:absolute;left:1322.5px;top:135.0px;line-height:36px;height:36px;font-size:19px;color:#dfe1e5;font-weight:normal;font-family:'Liberation Sans', sans-serif;white-space:pre;">student [MySQL-@192.168.128.128]</div>
<div style="position:absolute;left:2469.1px;top:142.1px;width:3.8px;height:3.8px;border-radius:3px;background:#ced0d6"></div>
<div style="position:absolute;left:2469.1px;top:150.1px;width:3.8px;height:3.8px;border-radius:3px;background:#ced0d6"></div>
<div style="position:absolute;left:2469.1px;top:158.1px;width:3.8px;height:3.8px;border-radius:3px;background:#ced0d6"></div>
<svg style="position:absolute;left:454.5px;top:196.5px;" width="24" height="24" viewBox="0 0 16 16" fill="none"><path d="M13.2 7 A5.5 5.5 0 0 0 3.3 5.2 M2.8 9 A5.5 5.5 0 0 0 12.7 10.8" stroke="#ced0d6" stroke-width="1" stroke-linecap="round" stroke-linejoin="round"/><path d="M1.2 8.2 L2.8 9.6 L4.4 8.2 M11.6 7.8 L13.2 6.4 L14.8 7.8" stroke="#ced0d6" stroke-width="1" stroke-linecap="round" stroke-linejoin="round"/></svg>
<svg style="position:absolute;left:494.0px;top:196.5px;" width="24" height="24" viewBox="0 0 16 16" fill="none"><circle cx="7.5" cy="7.5" r="6" stroke="#ced0d6" stroke-width="1" stroke-linecap="round" stroke-linejoin="round"/><path d="M7.5 4.5 V7.5 L9.5 9.5" stroke="#ced0d6" stroke-width="1" stroke-linecap="round" stroke-linejoin="round"/><path d="M16 12 V16 H12 Z" fill="#ced0d6"/></svg>
<div style="position:absolute;left:536px;top:200px;width:18px;height:18px;background:#535559;border-radius:3px"></div>
<div style="position:absolute;left:569px;top:193px;width:2px;height:31px;background:#43454a;"></div>
<svg style="position:absolute;left:581.0px;top:196.5px;" width="24" height="24" viewBox="0 0 16 16" fill="none"><path d="M8 2.5 V13.5 M2.5 8 H13.5" stroke="#ced0d6" stroke-width="1" stroke-linecap="round" stroke-linejoin="round"/></svg>
<svg style="position:absolute;left:620.4px;top:196.5px;" width="24" height="24" viewBox="0 0 16 16" fill="none"><path d="M2.5 8 H13.5" stroke="#5a5d63" stroke-width="1" stroke-linecap="round" stroke-linejoin="round"/></svg>
<svg style="position:absolute;left:660.0px;top:196.5px;" width="24" height="24" viewBox="0 0 16 16" fill="none"><path d="M2.5 6.5 H10 A3.6 3.6 0 0 1 10 13.7 H5.5 M5.8 3.2 L2.5 6.5 L5.8 9.8" stroke="#5a5d63" stroke-width="1" stroke-linecap="round" stroke-linejoin="round"/></svg>
<svg style="position:absolute;left:698.7px;top:196.5px;" width="24" height="24" viewBox="0 0 16 16" fill="none"><path d="M1.5 8 Q4.5 3 8 3 Q11.5 3 14.5 8 M1.5 8 Q3.5 11.5 6 12.5" stroke="#5a5d63" stroke-width="1" stroke-linecap="round" stroke-linejoin="round"/><circle cx="8" cy="8" r="2" stroke="#5a5d63" stroke-width="1" stroke-linecap="round" stroke-linejoin="round"/><path d="M10.5 15 V11 M8.5 12.5 L10.5 10.5 L12.5 12.5" stroke="#5a5d63" stroke-width="2"/></svg>
<svg style="position:absolute;left:738.0px;top:196.5px;" width="24" height="24" viewBox="0 0 16 16" fill="none"><path d="M8 2.5 L3 7.5 H5.5 V13.5 H10.5 V7.5 H13 Z" stroke="#5a5d63" stroke-width="1" stroke-linecap="round" stroke-linejoin="round"/></svg>
<div style="position:absolute;left:774px;top:193px;width:2px;height:31px;background:#43454a;"></div>
<div style="position:absolute;left:794px;top:190.5px;line-height:36px;height:36px;font-size:15px;color:#dfe1e5;font-weight:normal;font-family:'Liberation Sans', sans-serif;white-space:pre;">Tx: 自动</div>
<svg style="position:absolute;left:853.5px;top:198.0px;" width="21" height="21" viewBox="0 0 16 16" fill="none"><path d="M4 6.5 L8 10.5 L12 6.5" stroke="#b4b8bf" stroke-width="1" stroke-linecap="round" stroke-linejoin="round"/></svg>
<div style="position:absolute;left:885px;top:193px;width:2px;height:31px;background:#43454a;"></div>
<div style="position:absolute;left:900px;top:190.5px;line-height:36px;height:36px;font-size:15px;color:#dfe1e5;font-weight:normal;font-family:'Liberation Sans', sans-serif;white-space:pre;">DDL</div>
<svg style="position:absolute;left:946.0px;top:196.5px;" width="24" height="24" viewBox="0 0 16 16" fill="none"><circle cx="7" cy="7" r="4.8" stroke="#ced0d6" stroke-width="1" stroke-linecap="round" stroke-linejoin="round"/><path d="M10.5 10.5 L14 14" stroke="#ced0d6" stroke-width="1" stroke-linecap="round" stroke-linejoin="round"/></svg>
<div style="position:absolute;left:981px;top:192px;width:33px;height:33px;background:#43454a;border-radius:6px"></div>
<svg style="position:absolute;left:985.5px;top:196.5px;" width="24" height="24" viewBox="0 0 16 16" fill="none"><path d="M8 13.5 H3.5 Q1.5 13.5 1.5 11.5 V4.5 Q1.5 2.5 3.5 2.5 H12.5 Q14.5 2.5 14.5 4.5 V7" stroke="#ced0d6" stroke-width="1" stroke-linecap="round" stroke-linejoin="round"/><path d="M5.5 2.5 V13.5" stroke="#ced0d6" stroke-width="1" stroke-linecap="round" stroke-linejoin="round"/><path d="M8.5 8.5 H15.5 L13 11.5 V15 L11 14 V11.5 Z" fill="#548af7" stroke="#548af7" stroke-width="0.6" stroke-linejoin="round"/></svg>
<svg style="position:absolute;left:1025.0px;top:196.5px;" width="24" height="24" viewBox="0 0 16 16" fill="none"><path d="M1.5 2 V14 H14.5 M2.5 11 L5.5 6.5 L9 9 L13 4.5" stroke="#ced0d6" stroke-width="1" stroke-linecap="round" stroke-linejoin="round"/><circle cx="5.5" cy="6.5" r="1" fill="#ced0d6"/><circle cx="9" cy="9" r="1" fill="#ced0d6"/><circle cx="13" cy="4.5" r="1" fill="#ced0d6"/></svg>
<svg style="position:absolute;left:1063.6px;top:196.5px;" width="24" height="24" viewBox="0 0 16 16" fill="none"><rect x="1.5" y="2.5" width="13" height="10" rx="2" stroke="#ced0d6" stroke-width="1" stroke-linecap="round" stroke-linejoin="round"/><path d="M1.5 6 H14.5" stroke="#548af7" stroke-width="1.2"/><path d="M8.5 12.5 Q11.5 9 15 12.5 Q11.5 16 8.5 12.5 Z" fill="#2b2d30" stroke="#ced0d6" stroke-width="1" stroke-linecap="round" stroke-linejoin="round"/><circle cx="11.8" cy="12.5" r="0.9" fill="#ced0d6"/></svg>
<div style="position:absolute;left:2212px;top:190.5px;line-height:36px;height:36px;font-size:15px;color:#dfe1e5;font-weight:normal;font-family:'Liberation Sans', sans-serif;white-space:pre;">CSV</div>
<svg style="position:absolute;left:2245.5px;top:198.0px;" width="21" height="21" viewBox="0 0 16 16" fill="none"><path d="M4 6.5 L8 10.5 L12 6.5" stroke="#b4b8bf" stroke-width="1" stroke-linecap="round" stroke-linejoin="round"/></svg>
<div style="position:absolute;left:2277px;top:193px;width:2px;height:31px;background:#43454a;"></div>
<svg style="position:absolute;left:2291.0px;top:196.5px;" width="24" height="24" viewBox="0 0 16 16" fill="none"><path d="M8 2 V10 M4.5 7 L8 10.5 L11.5 7 M2.5 10.5 V13.5 H13.5 V10.5" stroke="#ced0d6" stroke-width="1" stroke-linecap="round" stroke-linejoin="round"/></svg>
<svg style="position:absolute;left:2330.0px;top:196.5px;" width="24" height="24" viewBox="0 0 16 16" fill="none"><path d="M8 11 V3 M4.5 6 L8 2.5 L11.5 6 M2.5 10.5 V13.5 H13.5 V10.5" stroke="#ced0d6" stroke-width="1" stroke-linecap="round" stroke-linejoin="round"/></svg>
<svg style="position:absolute;left:2369.0px;top:196.5px;" width="24" height="24" viewBox="0 0 16 16" fill="none"><path d="M14 3.5 H8 M10 1.5 L8 3.5 L10 5.5 M1.5 10.5 H8 M6 8.5 L8 10.5 L6 12.5" stroke="#ced0d6" stroke-width="1" stroke-linecap="round" stroke-linejoin="round"/><path d="M16 12 V16 H12 Z" fill="#ced0d6"/></svg>
<div style="position:absolute;left:2405px;top:193px;width:2px;height:31px;background:#43454a;"></div>
<svg style="position:absolute;left:2418.0px;top:196.5px;" width="24" height="24" viewBox="0 0 16 16" fill="none"><path d="M1 8 Q4.5 2.5 8 2.5 Q11.5 2.5 15 8 Q11.5 13.5 8 13.5 Q4.5 13.5 1 8 Z" stroke="#ced0d6" stroke-width="1" stroke-linecap="round" stroke-linejoin="round"/><circle cx="8" cy="8" r="2.2" stroke="#ced0d6" stroke-width="1" stroke-linecap="round" stroke-linejoin="round"/><path d="M16 12 V16 H12 Z" fill="#ced0d6"/></svg>
<svg style="position:absolute;left:2457.0px;top:196.5px;" width="24" height="24" viewBox="0 0 16 16" fill="none"><path d="M8.00 1.70 L8.25 1.71 L8.49 1.73 L8.73 1.81 L8.95 2.01 L9.09 2.51 L9.20 3.00 L9.35 3.22 L9.52 3.33 L9.70 3.40 L9.88 3.47 L10.05 3.55 L10.23 3.62 L10.42 3.67 L10.69 3.62 L11.11 3.34 L11.56 3.10 L11.86 3.10 L12.08 3.22 L12.27 3.38 L12.45 3.55 L12.62 3.73 L12.78 3.92 L12.90 4.14 L12.90 4.44 L12.66 4.89 L12.38 5.31 L12.33 5.58 L12.38 5.77 L12.45 5.95 L12.53 6.12 L12.60 6.30 L12.67 6.48 L12.78 6.65 L13.00 6.80 L13.49 6.91 L13.99 7.05 L14.19 7.27 L14.27 7.51 L14.29 7.75 L14.30 8.00 L14.29 8.25 L14.27 8.49 L14.19 8.73 L13.99 8.95 L13.49 9.09 L13.00 9.20 L12.78 9.35 L12.67 9.52 L12.60 9.70 L12.53 9.88 L12.45 10.05 L12.38 10.23 L12.33 10.42 L12.38 10.69 L12.66 11.11 L12.90 11.56 L12.90 11.86 L12.78 12.08 L12.62 12.27 L12.45 12.45 L12.27 12.62 L12.08 12.78 L11.86 12.90 L11.56 12.90 L11.11 12.66 L10.69 12.38 L10.42 12.33 L10.23 12.38 L10.05 12.45 L9.88 12.53 L9.70 12.60 L9.52 12.67 L9.35 12.78 L9.20 13.00 L9.09 13.49 L8.95 13.99 L8.73 14.19 L8.49 14.27 L8.25 14.29 L8.00 14.30 L7.75 14.29 L7.51 14.27 L7.27 14.19 L7.05 13.99 L6.91 13.49 L6.80 13.00 L6.65 12.78 L6.48 12.67 L6.30 12.60 L6.12 12.53 L5.95 12.45 L5.77 12.38 L5.58 12.33 L5.31 12.38 L4.89 12.66 L4.44 12.90 L4.14 12.90 L3.92 12.78 L3.73 12.62 L3.55 12.45 L3.38 12.27 L3.22 12.08 L3.10 11.86 L3.10 11.56 L3.34 11.11 L3.62 10.69 L3.67 10.42 L3.62 10.23 L3.55 10.05 L3.47 9.88 L3.40 9.70 L3.33 9.52 L3.22 9.35 L3.00 9.20 L2.51 9.09 L2.01 8.95 L1.81 8.73 L1.73 8.49 L1.71 8.25 L1.70 8.00 L1.71 7.75 L1.73 7.51 L1.81 7.27 L2.01 7.05 L2.51 6.91 L3.00 6.80 L3.22 6.65 L3.33 6.48 L3.40 6.30 L3.47 6.12 L3.55 5.95 L3.62 5.77 L3.67 5.58 L3.62 5.31 L3.34 4.89 L3.10 4.44 L3.10 4.14 L3.22 3.92 L3.38 3.73 L3.55 3.55 L3.73 3.38 L3.92 3.22 L4.14 3.10 L4.44 3.10 L4.89 3.34 L5.31 3.62 L5.58 3.67 L5.77 3.62 L5.95 3.55 L6.12 3.47 L6.30 3.40 L6.48 3.33 L6.65 3.22 L6.80 3.00 L6.91 2.51 L7.05 2.01 L7.27 1.81 L7.51 1.73 L7.75 1.71 Z" stroke="#ced0d6" stroke-width="1" stroke-linecap="round" stroke-linejoin="round"/><circle cx="8" cy="8" r="2" stroke="#ced0d6" stroke-width="1" stroke-linecap="round" stroke-linejoin="round"/><path d="M16 12 V16 H12 Z" fill="#ced0d6"/></svg>
<svg style="position:absolute;left:446.0px;top:246.0px;" width="24" height="24" viewBox="0 0 16 16" fill="none"><path d="M1.5 1.83 H12.37 L8.6 7.6 V11.6 L5.3 13.3 V7.6 Z" stroke="#ced0d6" stroke-width="1" stroke-linecap="round" stroke-linejoin="round"/><path d="M11.3 6.3 H15.3 L13.3 8.6 Z" fill="#ced0d6"/></svg>
<div style="position:absolute;left:480px;top:240.0px;line-height:36px;height:36px;font-size:20px;color:#6f737a;font-weight:normal;font-family:'Liberation Mono', monospace;white-space:pre;">WHERE</div>
<svg style="position:absolute;left:1478.0px;top:246.0px;" width="24" height="24" viewBox="0 0 16 16" fill="none"><path d="M1.5 3 H10 M1.5 7.5 H7.5 M1.5 12 H5" stroke="#ced0d6" stroke-width="1" stroke-linecap="round" stroke-linejoin="round"/><path d="M10 7 H14.5 L12.25 9.5 Z" fill="#ced0d6"/></svg>
<div style="position:absolute;left:1512px;top:240.0px;line-height:36px;height:36px;font-size:20px;color:#6f737a;font-weight:normal;font-family:'Liberation Mono', monospace;white-space:pre;">ORDER BY</div>
<div style="position:absolute;left:436px;top:279px;width:438px;height:39px;background:#2b2d30;"></div>
<div style="position:absolute;left:472px;top:279px;width:2px;height:39px;background:#1e1f22;"></div>
<div style="position:absolute;left:658px;top:279px;width:2px;height:39px;background:#1e1f22;"></div>
<div style="position:absolute;left:436px;top:358px;width:440px;height:2px;background:#393b40;"></div>
<div style="position:absolute;left:436px;top:398.5px;width:440px;height:2px;background:#393b40;"></div>
<div style="position:absolute;left:436px;top:439px;width:440px;height:2px;background:#393b40;"></div>
<div style="position:absolute;left:436px;top:479px;width:440px;height:2px;background:#393b40;"></div>
<div style="position:absolute;left:472px;top:319px;width:2px;height:162px;background:#393b40;"></div>
<div style="position:absolute;left:658px;top:319px;width:2px;height:162px;background:#393b40;"></div>
<div style="position:absolute;left:874px;top:319px;width:2px;height:162px;background:#393b40;"></div>
<svg style="position:absolute;left:480.0px;top:286.5px;" width="24" height="24" viewBox="0 0 16 16" fill="none"><rect x="1.6" y="3" width="3.7" height="10.7" fill="#4e5157"/><path d="M1.5 11.3 V4.83 Q1.5 2.83 3.5 2.83 H12.37 Q14.37 2.83 14.37 4.83 V11.83 Q14.37 13.83 12.37 13.83 H4.7 M5.33 2.83 V12.2" stroke="#ced0d6" stroke-width="1" stroke-linecap="round" stroke-linejoin="round"/><circle cx="2.47" cy="13.8" r="2.1" fill="#2b2d30" stroke="#ced0d6" stroke-width="1" stroke-linecap="round" stroke-linejoin="round"/></svg>
<div style="position:absolute;left:510px;top:281.5px;line-height:36px;height:36px;font-size:19.5px;color:#dfe1e5;font-weight:normal;font-family:'Liberation Mono', monospace;white-space:pre;">id</div>
<svg style="position:absolute;left:545.0px;top:286.5px;" width="24" height="24" viewBox="0 0 16 16" fill="none"><path d="M2 2.5 H14 L9.2 8 V14.5 L6.8 12.8 V8 Z" stroke="#ced0d6" stroke-width="1" stroke-linecap="round" stroke-linejoin="round"/></svg>
<svg style="position:absolute;left:628px;top:291.5px;" width="10" height="14" viewBox="0 0 10 14" fill="none"><path d="M1.5 5.5 L5 1.5 L8.5 5.5 Z M1.5 8.5 L5 12.5 L8.5 8.5 Z" fill="#868a91"/></svg>
<svg style="position:absolute;left:666.0px;top:286.5px;" width="24" height="24" viewBox="0 0 16 16" fill="none"><rect x="1.5" y="2.5" width="13" height="11" rx="2" stroke="#ced0d6" stroke-width="1" stroke-linecap="round" stroke-linejoin="round"/><rect x="2.2" y="3.2" width="2.6" height="9.6" fill="#4e5157"/><path d="M5 2.5 V13.5" stroke="#ced0d6" stroke-width="1" stroke-linecap="round" stroke-linejoin="round"/></svg>
<div style="position:absolute;left:697px;top:281.5px;line-height:36px;height:36px;font-size:19.5px;color:#dfe1e5;font-weight:normal;font-family:'Liberation Mono', monospace;white-space:pre;">name</div>
<svg style="position:absolute;left:755.0px;top:286.5px;" width="24" height="24" viewBox="0 0 16 16" fill="none"><path d="M2 2.5 H14 L9.2 8 V14.5 L6.8 12.8 V8 Z" stroke="#ced0d6" stroke-width="1" stroke-linecap="round" stroke-linejoin="round"/></svg>
<svg style="position:absolute;left:844px;top:291.5px;" width="10" height="14" viewBox="0 0 10 14" fill="none"><path d="M1.5 5.5 L5 1.5 L8.5 5.5 Z M1.5 8.5 L5 12.5 L8.5 8.5 Z" fill="#868a91"/></svg>
<div style="position:absolute;left:436px;top:323.0px;line-height:36px;height:36px;font-size:19.5px;color:#565b63;font-weight:normal;font-family:'Liberation Mono', monospace;white-space:pre;width:38px;text-align:center">1</div>
<div style="position:absolute;left:560px;top:323.0px;line-height:36px;height:36px;font-size:19.5px;color:#dfe1e5;font-weight:normal;font-family:'Liberation Mono', monospace;white-space:pre;width:91px;text-align:right">1</div>
<div style="position:absolute;left:665px;top:322.0px;line-height:36px;height:36px;font-size:18.5px;color:#d0d2d8;font-weight:normal;font-family:'Liberation Serif', serif;white-space:pre;">黛绮丝</div>
<div style="position:absolute;left:436px;top:363.75px;line-height:36px;height:36px;font-size:19.5px;color:#565b63;font-weight:normal;font-family:'Liberation Mono', monospace;white-space:pre;width:38px;text-align:center">2</div>
<div style="position:absolute;left:560px;top:363.75px;line-height:36px;height:36px;font-size:19.5px;color:#dfe1e5;font-weight:normal;font-family:'Liberation Mono', monospace;white-space:pre;width:91px;text-align:right">2</div>
<div style="position:absolute;left:665px;top:362.75px;line-height:36px;height:36px;font-size:18.5px;color:#d0d2d8;font-weight:normal;font-family:'Liberation Serif', serif;white-space:pre;">谢逊</div>
<div style="position:absolute;left:436px;top:404.25px;line-height:36px;height:36px;font-size:19.5px;color:#565b63;font-weight:normal;font-family:'Liberation Mono', monospace;white-space:pre;width:38px;text-align:center">3</div>
<div style="position:absolute;left:560px;top:404.25px;line-height:36px;height:36px;font-size:19.5px;color:#dfe1e5;font-weight:normal;font-family:'Liberation Mono', monospace;white-space:pre;width:91px;text-align:right">3</div>
<div style="position:absolute;left:665px;top:403.25px;line-height:36px;height:36px;font-size:18.5px;color:#d0d2d8;font-weight:normal;font-family:'Liberation Serif', serif;white-space:pre;">殷天正</div>
<div style="position:absolute;left:436px;top:444.5px;line-height:36px;height:36px;font-size:19.5px;color:#565b63;font-weight:normal;font-family:'Liberation Mono', monospace;white-space:pre;width:38px;text-align:center">4</div>
<div style="position:absolute;left:560px;top:444.5px;line-height:36px;height:36px;font-size:19.5px;color:#dfe1e5;font-weight:normal;font-family:'Liberation Mono', monospace;white-space:pre;width:91px;text-align:right">4</div>
<div style="position:absolute;left:665px;top:443.5px;line-height:36px;height:36px;font-size:18.5px;color:#d0d2d8;font-weight:normal;font-family:'Liberation Serif', serif;white-space:pre;">韦一笑</div>
<div style="position:absolute;left:1398px;top:900px;width:135px;height:51px;border:1.5px solid #43454a;border-radius:13px;background:#2b2d30"></div>
<div style="position:absolute;left:1418px;top:912.0px;line-height:36px;height:36px;font-size:16px;color:#dfe1e5;font-weight:normal;font-family:'Liberation Sans', sans-serif;white-space:pre;">4 行</div>
<svg style="position:absolute;left:1455.5px;top:920.0px;" width="19" height="19" viewBox="0 0 16 16" fill="none"><path d="M4 6.5 L8 10.5 L12 6.5" stroke="#b4b8bf" stroke-width="1" stroke-linecap="round" stroke-linejoin="round"/></svg>
<div style="position:absolute;left:1482px;top:912px;width:2px;height:30px;background:#43454a;"></div>
<div style="position:absolute;left:1506.1px;top:917.6px;width:3.8px;height:3.8px;border-radius:3px;background:#ced0d6"></div>
<div style="position:absolute;left:1506.1px;top:925.6px;width:3.8px;height:3.8px;border-radius:3px;background:#ced0d6"></div>
<div style="position:absolute;left:1506.1px;top:933.6px;width:3.8px;height:3.8px;border-radius:3px;background:#ced0d6"></div>
<div style="position:absolute;left:2499px;top:121px;width:1px;height:1362px;background:#1e1f22;"></div>
<svg style="position:absolute;left:2516.0px;top:137.0px;" width="30" height="30" viewBox="0 0 16 16" fill="none"><path d="M1.5 3.5 Q1.5 2.5 2.5 2.5 H6 L7.5 4 H13.5 Q14.5 4 14.5 5 V12.5 Q14.5 13.5 13.5 13.5 H2.5 Q1.5 13.5 1.5 12.5 Z" stroke="#ced0d6" stroke-width="0.95" stroke-linecap="round" stroke-linejoin="round"/></svg>
<div style="position:absolute;left:2512px;top:189px;width:37px;height:1.5px;background:#393b40;"></div>
<svg style="position:absolute;left:2516.0px;top:214.0px;" width="30" height="30" viewBox="0 0 16 16" fill="none"><path d="M2.5 2 V14 M2.5 4.5 H5 M2.5 11.5 H5" stroke="#ced0d6" stroke-width="0.95" stroke-linecap="round" stroke-linejoin="round"/><rect x="5" y="2.5" width="9.5" height="4.5" rx="1" stroke="#ced0d6" stroke-width="0.95" stroke-linecap="round" stroke-linejoin="round"/><rect x="5" y="9.5" width="9.5" height="4.5" rx="1" stroke="#ced0d6" stroke-width="0.95" stroke-linecap="round" stroke-linejoin="round"/></svg>
<div style="position:absolute;left:61px;top:972px;width:2438px;height:1px;background:#1e1f22;"></div>
<div style="position:absolute;left:80px;top:988.5px;line-height:36px;height:36px;font-size:18px;color:#dfe1e5;font-weight:bold;font-family:'Liberation Sans', sans-serif;white-space:pre;">服务</div>
<div style="position:absolute;left:61px;top:1033px;width:2438px;height:1px;background:#1e1f22;"></div>
<div style="position:absolute;left:80px;top:1043.0px;line-height:36px;height:36px;font-size:19px;color:#dfe1e5;font-weight:normal;font-family:'Liberation Sans', sans-serif;white-space:pre;">Tx</div>
<svg style="position:absolute;left:97px;top:1063px;" width="7" height="7" viewBox="0 0 7 7" fill="none"><path d="M7 0 V7 H0 Z" fill="#ced0d6"/></svg>
<div style="position:absolute;left:75px;top:1086px;width:31px;height:2px;background:#43454a;"></div>
<div style="position:absolute;left:81px;top:1103px;width:18px;height:18px;background:#58595c;border-radius:3px"></div>
<div style="position:absolute;left:118px;top:1034px;width:2px;height:449px;background:#1e1f22;"></div>
<svg style="position:absolute;left:137.0px;top:1049.0px;" width="24" height="24" viewBox="0 0 16 16" fill="none"><path d="M8 2.5 V13.5 M2.5 8 H13.5" stroke="#ced0d6" stroke-width="1" stroke-linecap="round" stroke-linejoin="round"/><path d="M16 11.8 V16 H11.8 Z" fill="#ced0d6"/></svg>
<svg style="position:absolute;left:177.0px;top:1049.0px;" width="24" height="24" viewBox="0 0 16 16" fill="none"><path d="M1 8 Q4.5 2.5 8 2.5 Q11.5 2.5 15 8 Q11.5 13.5 8 13.5 Q4.5 13.5 1 8 Z" stroke="#ced0d6" stroke-width="1" stroke-linecap="round" stroke-linejoin="round"/><circle cx="8" cy="8" r="2.2" stroke="#ced0d6" stroke-width="1" stroke-linecap="round" stroke-linejoin="round"/><path d="M16 12 V16 H12 Z" fill="#ced0d6"/></svg>
<svg style="position:absolute;left:216.5px;top:1049.0px;" width="24" height="24" viewBox="0 0 16 16" fill="none"><path d="M8 3.5 H3.5 Q1.3 3.5 1.3 5.7 V10.4 Q1.3 12.6 3.5 12.6 H10.1 Q12.3 12.6 12.3 10.4 V8.3 M12 0.6 V6.9 M8.85 3.7 H15.2" stroke="#ced0d6" stroke-width="1" stroke-linecap="round" stroke-linejoin="round"/></svg>
<div style="position:absolute;left:252px;top:1045px;width:2px;height:32px;background:#43454a;"></div>
<svg style="position:absolute;left:266.0px;top:1049.0px;" width="24" height="24" viewBox="0 0 16 16" fill="none"><path d="M4.5 6 L8 2.5 L11.5 6 M4.5 10 L8 13.5 L11.5 10" stroke="#ced0d6" stroke-width="1" stroke-linecap="round" stroke-linejoin="round"/></svg>
<svg style="position:absolute;left:305.0px;top:1049.0px;" width="24" height="24" viewBox="0 0 16 16" fill="none"><path d="M4.5 2 L8 5.5 L11.5 2 M4.5 14 L8 10.5 L11.5 14" stroke="#ced0d6" stroke-width="1" stroke-linecap="round" stroke-linejoin="round"/></svg>
<div style="position:absolute;left:138px;top:1346px;width:301px;height:35px;background:#43454a;border-radius:6px"></div>
<svg style="position:absolute;left:125.0px;top:1100.0px;" width="24" height="24" viewBox="0 0 16 16" fill="none"><path d="M1.5 3.5 Q1.5 2.5 2.5 2.5 H6 L7.5 4 H13.5 Q14.5 4 14.5 5 V12.5 Q14.5 13.5 13.5 13.5 H2.5 Q1.5 13.5 1.5 12.5 Z" fill="#43454a" stroke="#ced0d6" stroke-width="1" stroke-linecap="round" stroke-linejoin="round"/></svg>
<div style="position:absolute;left:153.5px;top:1095.0px;line-height:36px;height:36px;font-size:19px;color:#dfe1e5;font-weight:normal;font-family:'Liberation Sans', sans-serif;white-space:pre;">Database</div>
<svg style="position:absolute;left:122.0px;top:1136.0px;" width="24" height="24" viewBox="0 0 16 16" fill="none"><path d="M4 6.5 L8 10.5 L12 6.5" stroke="#a8abb0" stroke-width="1" stroke-linecap="round" stroke-linejoin="round"/></svg>
<svg style="position:absolute;left:150.5px;top:1132px;" width="30" height="30" viewBox="0 0 30 30" fill="none"><path d="M13.75 21.6 L10.5 17.2 L9.3 19.2 C8 18 7.6 16 8.4 13.2 C7.5 11 6.4 9 4.6 6.1 C5.5 5.3 6.5 5.6 8 6.8 C11 7.2 14 9 16.4 12.3 C18 15 18.5 17.5 21 19 C22.5 19.8 24 20.4 24.6 21.2 L21.4 22.2 L25.5 25.7" stroke="#12a9e9" stroke-width="1.35" stroke-linejoin="round" stroke-linecap="round" fill="none"/><circle cx="9.5" cy="9.5" r="0.6" fill="#12a9e9"/></svg>
<div style="position:absolute;left:183px;top:1131.0px;line-height:36px;height:36px;font-size:19px;color:#dfe1e5;font-weight:normal;font-family:'Liberation Sans', sans-serif;white-space:pre;">@localhost</div>
<svg style="position:absolute;left:182.0px;top:1172.0px;" width="24" height="24" viewBox="0 0 16 16" fill="none"><rect x="0.6" y="6.6" width="2.8" height="2.9" rx="1" stroke="#ced0d6" stroke-width="1" stroke-linecap="round" stroke-linejoin="round"/><path d="M11.4 3.6 H7.6 Q4 3.6 4 8.05 Q4 12.5 7.6 12.5 H11.4 Z M11.4 5.5 H15.4 M11.4 10.6 H15.4" stroke="#ced0d6" stroke-width="1" stroke-linecap="round" stroke-linejoin="round"/></svg>
<div style="position:absolute;left:210.5px;top:1167.0px;line-height:36px;height:36px;font-size:19px;color:#dfe1e5;font-weight:normal;font-family:'Liberation Sans', sans-serif;white-space:pre;">console_7</div>
<svg style="position:absolute;left:122.0px;top:1208.0px;" width="24" height="24" viewBox="0 0 16 16" fill="none"><path d="M4 6.5 L8 10.5 L12 6.5" stroke="#a8abb0" stroke-width="1" stroke-linecap="round" stroke-linejoin="round"/></svg>
<svg style="position:absolute;left:150.5px;top:1204px;" width="30" height="30" viewBox="0 0 30 30" fill="none"><path d="M13.75 21.6 L10.5 17.2 L9.3 19.2 C8 18 7.6 16 8.4 13.2 C7.5 11 6.4 9 4.6 6.1 C5.5 5.3 6.5 5.6 8 6.8 C11 7.2 14 9 16.4 12.3 C18 15 18.5 17.5 21 19 C22.5 19.8 24 20.4 24.6 21.2 L21.4 22.2 L25.5 25.7" stroke="#12a9e9" stroke-width="1.35" stroke-linejoin="round" stroke-linecap="round" fill="none"/><circle cx="9.5" cy="9.5" r="0.6" fill="#12a9e9"/></svg>
<div style="position:absolute;left:182.4px;top:1203.0px;line-height:36px;height:36px;font-size:19px;color:#dfe1e5;font-weight:normal;font-family:'Liberation Sans', sans-serif;white-space:pre;">MySQL-@192.168.128.128</div>
<svg style="position:absolute;left:150.0px;top:1244.0px;" width="24" height="24" viewBox="0 0 16 16" fill="none"><path d="M4 6.5 L8 10.5 L12 6.5" stroke="#a8abb0" stroke-width="1" stroke-linecap="round" stroke-linejoin="round"/></svg>
<svg style="position:absolute;left:182.0px;top:1244.0px;" width="24" height="24" viewBox="0 0 16 16" fill="none"><rect x="0.6" y="6.6" width="2.8" height="2.9" rx="1" stroke="#ced0d6" stroke-width="1" stroke-linecap="round" stroke-linejoin="round"/><path d="M11.4 3.6 H7.6 Q4 3.6 4 8.05 Q4 12.5 7.6 12.5 H11.4 Z M11.4 5.5 H15.4 M11.4 10.6 H15.4" stroke="#ced0d6" stroke-width="1" stroke-linecap="round" stroke-linejoin="round"/><circle cx="13.6" cy="13.6" r="2.1" fill="#00e000" stroke="#1b2a1b" stroke-width="0.5"/></svg>
<div style="position:absolute;left:210.4px;top:1239.0px;line-height:36px;height:36px;font-size:19px;color:#dfe1e5;font-weight:normal;font-family:'Liberation Sans', sans-serif;white-space:pre;">console_2<span style="margin-left:10px;color:#6f737a">47 ms</span></div>
<svg style="position:absolute;left:207.5px;top:1276px;" width="30" height="30" viewBox="0 0 30 30" fill="none"><path d="M13.75 21.6 L10.5 17.2 L9.3 19.2 C8 18 7.6 16 8.4 13.2 C7.5 11 6.4 9 4.6 6.1 C5.5 5.3 6.5 5.6 8 6.8 C11 7.2 14 9 16.4 12.3 C18 15 18.5 17.5 21 19 C22.5 19.8 24 20.4 24.6 21.2 L21.4 22.2 L25.5 25.7" stroke="#12a9e9" stroke-width="1.35" stroke-linejoin="round" stroke-linecap="round" fill="none"/><circle cx="9.5" cy="9.5" r="0.6" fill="#12a9e9"/></svg>
<div style="position:absolute;left:239.4px;top:1275.0px;line-height:36px;height:36px;font-size:19px;color:#dfe1e5;font-weight:normal;font-family:'Liberation Sans', sans-serif;white-space:pre;">console_2<span style="margin-left:10px;color:#6f737a">47 ms</span></div>
<svg style="position:absolute;left:150.0px;top:1316.0px;" width="24" height="24" viewBox="0 0 16 16" fill="none"><path d="M4 6.5 L8 10.5 L12 6.5" stroke="#a8abb0" stroke-width="1" stroke-linecap="round" stroke-linejoin="round"/></svg>
<svg style="position:absolute;left:182.0px;top:1316.0px;" width="24" height="24" viewBox="0 0 16 16" fill="none"><rect x="0.6" y="6.6" width="2.8" height="2.9" rx="1" stroke="#ced0d6" stroke-width="1" stroke-linecap="round" stroke-linejoin="round"/><path d="M11.4 3.6 H7.6 Q4 3.6 4 8.05 Q4 12.5 7.6 12.5 H11.4 Z M11.4 5.5 H15.4 M11.4 10.6 H15.4" stroke="#ced0d6" stroke-width="1" stroke-linecap="round" stroke-linejoin="round"/><circle cx="13.6" cy="13.6" r="2.1" fill="#00e000" stroke="#1b2a1b" stroke-width="0.5"/></svg>
<div style="position:absolute;left:210.4px;top:1311.0px;line-height:36px;height:36px;font-size:19px;color:#dfe1e5;font-weight:normal;font-family:'Liberation Sans', sans-serif;white-space:pre;">stu_v_1<span style="margin-left:10px;color:#6f737a">188 ms</span></div>
<svg style="position:absolute;left:210.0px;top:1352.0px;" width="24" height="24" viewBox="0 0 16 16" fill="none"><path d="M7.5 13.5 H3.5 Q1.5 13.5 1.5 11.5 V4.5 Q1.5 2.5 3.5 2.5 H12.5 Q14.5 2.5 14.5 4.5 V8.5" fill="#43454a" stroke="#ced0d6" stroke-width="1" stroke-linecap="round" stroke-linejoin="round"/><path d="M1.5 5.5 H14.5 M5.5 2.5 V13.5 M10.5 2.5 V7.5" stroke="#ced0d6" stroke-width="1" stroke-linecap="round" stroke-linejoin="round"/><circle cx="11" cy="11" r="2.5" fill="#43454a" stroke="#548af7" stroke-width="1"/><path d="M12.9 12.9 L14.5 14.5" stroke="#548af7" stroke-width="1" stroke-linecap="round"/></svg>
<div style="position:absolute;left:239.4px;top:1347.0px;line-height:36px;height:36px;font-size:19px;color:#dfe1e5;font-weight:normal;font-family:'Liberation Sans', sans-serif;white-space:pre;">stu_v_1<span style="margin-left:10px;color:#6f737a">188 ms</span></div>
<svg style="position:absolute;left:150.0px;top:1388.0px;" width="24" height="24" viewBox="0 0 16 16" fill="none"><path d="M4 6.5 L8 10.5 L12 6.5" stroke="#a8abb0" stroke-width="1" stroke-linecap="round" stroke-linejoin="round"/></svg>
<svg style="position:absolute;left:182.0px;top:1388.0px;" width="24" height="24" viewBox="0 0 16 16" fill="none"><rect x="0.6" y="6.6" width="2.8" height="2.9" rx="1" stroke="#ced0d6" stroke-width="1" stroke-linecap="round" stroke-linejoin="round"/><path d="M11.4 3.6 H7.6 Q4 3.6 4 8.05 Q4 12.5 7.6 12.5 H11.4 Z M11.4 5.5 H15.4 M11.4 10.6 H15.4" stroke="#ced0d6" stroke-width="1" stroke-linecap="round" stroke-linejoin="round"/><circle cx="13.6" cy="13.6" r="2.1" fill="#00e000" stroke="#1b2a1b" stroke-width="0.5"/></svg>
<div style="position:absolute;left:210.4px;top:1383.0px;line-height:36px;height:36px;font-size:19px;color:#dfe1e5;font-weight:normal;font-family:'Liberation Sans', sans-serif;white-space:pre;">student<span style="margin-left:10px;color:#6f737a">209 ms</span></div>
<svg style="position:absolute;left:210.0px;top:1424.0px;" width="24" height="24" viewBox="0 0 16 16" fill="none"><rect x="1.5" y="2.5" width="13" height="11" rx="2" fill="#43454a" stroke="#ced0d6" stroke-width="1" stroke-linecap="round" stroke-linejoin="round"/><path d="M1.5 5.5 H14.5 M5.5 2.5 V13.5 M10.5 2.5 V13.5" stroke="#ced0d6" stroke-width="1" stroke-linecap="round" stroke-linejoin="round"/></svg>
<div style="position:absolute;left:239.4px;top:1419.0px;line-height:36px;height:36px;font-size:19px;color:#dfe1e5;font-weight:normal;font-family:'Liberation Sans', sans-serif;white-space:pre;">student<span style="margin-left:10px;color:#6f737a">209 ms</span></div>
<div style="position:absolute;left:444px;top:1089px;width:12px;height:362px;background:#46484d;border-radius:1px"></div>
<div style="position:absolute;left:159px;top:1470px;width:274px;height:12px;background:#46484d;"></div>
<div style="position:absolute;left:457px;top:1034px;width:1983px;height:449px;background:#1e1f22;"></div>
<div style="position:absolute;left:2440px;top:1035px;width:1px;height:448px;background:#393b40;"></div>
<div style="position:absolute;left:460px;top:1036.0px;line-height:33px;height:33px;font-size:20px;color:#bcbec4;font-weight:normal;font-family:'Liberation Mono', monospace;white-space:pre;">[2025-08-09 14:03:37] <span style="font-family:'Liberation Serif',serif;font-size:18.4px">已连接</span></div>
<div style="position:absolute;left:460px;top:1068.9px;line-height:33px;height:33px;font-size:20px;color:#bcbec4;font-weight:normal;font-family:'Liberation Mono', monospace;white-space:pre;">itcast&gt; <span style="color:#cf8e6d">use</span> itcast</div>
<div style="position:absolute;left:460px;top:1101.8px;line-height:33px;height:33px;font-size:20px;color:#bcbec4;font-weight:normal;font-family:'Liberation Mono', monospace;white-space:pre;">[2025-08-09 14:03:37] <span style="font-family:'Liberation Serif',serif;font-size:18.4px">在</span> 3 ms <span style="font-family:'Liberation Serif',serif;font-size:18.4px">内完成</span></div>
<div style="position:absolute;left:460px;top:1134.7px;line-height:33px;height:33px;font-size:20px;color:#bcbec4;font-weight:normal;font-family:'Liberation Mono', monospace;white-space:pre;">itcast&gt; <span style="color:#cf8e6d">SELECT</span> t.*</div>
<div style="position:absolute;left:460px;top:1167.6px;line-height:33px;height:33px;font-size:20px;color:#bcbec4;font-weight:normal;font-family:'Liberation Mono', monospace;white-space:pre;">        <span style="color:#cf8e6d">FROM</span> itcast.stu_v_1 t</div>
<div style="position:absolute;left:460px;top:1200.5px;line-height:33px;height:33px;font-size:20px;color:#bcbec4;font-weight:normal;font-family:'Liberation Mono', monospace;white-space:pre;">        <span style="color:#cf8e6d">LIMIT</span> <span style="color:#2aacb8">501</span></div>
<div style="position:absolute;left:460px;top:1233.4px;line-height:33px;height:33px;font-size:20px;color:#bcbec4;font-weight:normal;font-family:'Liberation Mono', monospace;white-space:pre;">[2025-08-09 14:03:38] <span style="font-family:'Liberation Serif',serif;font-size:18.4px">在</span> 111 ms (execution: 8 ms, fetching: 103 ms) <span style="font-family:'Liberation Serif',serif;font-size:18.4px">内检索到从</span> 1 <span style="font-family:'Liberation Serif',serif;font-size:18.4px">开始的</span> 4 <span style="font-family:'Liberation Serif',serif;font-size:18.4px">行</span></div>
<svg style="position:absolute;left:2458.5px;top:1050.0px;" width="24" height="24" viewBox="0 0 16 16" fill="none"><path d="M8 14 V2.5 M3.5 7 L8 2.5 L12.5 7" stroke="#5a5d63" stroke-width="1" stroke-linecap="round" stroke-linejoin="round"/></svg>
<svg style="position:absolute;left:2458.5px;top:1090.0px;" width="24" height="24" viewBox="0 0 16 16" fill="none"><path d="M8 2 V13.5 M3.5 9 L8 13.5 L12.5 9" stroke="#5a5d63" stroke-width="1" stroke-linecap="round" stroke-linejoin="round"/></svg>
<svg style="position:absolute;left:2458.5px;top:1130.0px;" width="24" height="24" viewBox="0 0 16 16" fill="none"><path d="M1.5 3 H14.5 M1.5 7.5 H11.5 Q14.5 7.5 14.5 10 Q14.5 12.5 11.5 12.5 H8.5 M10.5 10.5 L8.5 12.5 L10.5 14.5 M1.5 12.5 H5" stroke="#ced0d6" stroke-width="1" stroke-linecap="round" stroke-linejoin="round"/></svg>
<svg style="position:absolute;left:2458.5px;top:1168.0px;" width="24" height="24" viewBox="0 0 16 16" fill="none"><path d="M1.5 3 H6 M1.5 7.5 H6 M1.5 14 H14.5 M11 2 V11 M8 8 L11 11 L14 8" stroke="#ced0d6" stroke-width="1" stroke-linecap="round" stroke-linejoin="round"/></svg>
<svg style="position:absolute;left:2458.5px;top:1207.0px;" width="24" height="24" viewBox="0 0 16 16" fill="none"><path d="M4.5 5 V2.5 H11.5 V5 M4.5 11.5 H2.5 Q1.5 11.5 1.5 10.5 V6 Q1.5 5 2.5 5 H13.5 Q14.5 5 14.5 6 V10.5 Q14.5 11.5 13.5 11.5 H11.5 M4.5 9 H11.5 V14 H4.5 Z" stroke="#ced0d6" stroke-width="1" stroke-linecap="round" stroke-linejoin="round"/><circle cx="12" cy="7" r="0.6" fill="#ced0d6"/></svg>
<svg style="position:absolute;left:2458.5px;top:1246.0px;" width="24" height="24" viewBox="0 0 16 16" fill="none"><path d="M2 4 H14 M6 4 V2.5 H10 V4 M3.5 4 L4 13.5 Q4 14.5 5 14.5 H11 Q12 14.5 12 13.5 L12.5 4 M6.5 7 V11.5 M9.5 7 V11.5" stroke="#ced0d6" stroke-width="1" stroke-linecap="round" stroke-linejoin="round"/></svg>
<div style="position:absolute;left:0px;top:1483px;width:2560px;height:1px;background:#1e1f22;"></div>
<div style="position:absolute;left:0px;top:1484px;width:2560px;height:44px;background:#2b2d30;"></div>
<div style="position:absolute;left:22px;top:1487.0px;line-height:36px;height:36px;font-size:19px;color:#9da0a8;font-weight:normal;font-family:'Liberation Sans', sans-serif;white-space:pre;">Database</div>
<svg style="position:absolute;left:109.1px;top:1494.5px;" width="21" height="21" viewBox="0 0 16 16" fill="none"><path d="M6.5 4 L10.5 8 L6.5 12" stroke="#9da0a8" stroke-width="1" stroke-linecap="round" stroke-linejoin="round"/></svg>
<div style="position:absolute;left:138.5px;top:1487.0px;line-height:36px;height:36px;font-size:19px;color:#9da0a8;font-weight:normal;font-family:'Liberation Sans', sans-serif;white-space:pre;">MySQL-@192.168.128.128</div>
<svg style="position:absolute;left:379.3px;top:1494.5px;" width="21" height="21" viewBox="0 0 16 16" fill="none"><path d="M6.5 4 L10.5 8 L6.5 12" stroke="#9da0a8" stroke-width="1" stroke-linecap="round" stroke-linejoin="round"/></svg>
<div style="position:absolute;left:408.7px;top:1487.0px;line-height:36px;height:36px;font-size:19px;color:#9da0a8;font-weight:normal;font-family:'Liberation Sans', sans-serif;white-space:pre;">itcast</div>
<svg style="position:absolute;left:462.3px;top:1494.5px;" width="21" height="21" viewBox="0 0 16 16" fill="none"><path d="M6.5 4 L10.5 8 L6.5 12" stroke="#9da0a8" stroke-width="1" stroke-linecap="round" stroke-linejoin="round"/></svg>
<div style="position:absolute;left:491px;top:1487.0px;line-height:36px;height:36px;font-size:18px;color:#9da0a8;font-weight:normal;font-family:'Liberation Sans', sans-serif;white-space:pre;">视图</div>
<svg style="position:absolute;left:534.1px;top:1494.5px;" width="21" height="21" viewBox="0 0 16 16" fill="none"><path d="M6.5 4 L10.5 8 L6.5 12" stroke="#9da0a8" stroke-width="1" stroke-linecap="round" stroke-linejoin="round"/></svg>
<svg style="position:absolute;left:564.0px;top:1494.0px;" width="22" height="22" viewBox="0 0 16 16" fill="none"><path d="M7.5 13.5 H3.5 Q1.5 13.5 1.5 11.5 V4.5 Q1.5 2.5 3.5 2.5 H12.5 Q14.5 2.5 14.5 4.5 V8.5" fill="none" stroke="#ced0d6" stroke-width="1" stroke-linecap="round" stroke-linejoin="round"/><path d="M1.5 5.5 H14.5 M5.5 2.5 V13.5 M10.5 2.5 V7.5" stroke="#ced0d6" stroke-width="1" stroke-linecap="round" stroke-linejoin="round"/><circle cx="11" cy="11" r="2.5" fill="none" stroke="#548af7" stroke-width="1"/><path d="M12.9 12.9 L14.5 14.5" stroke="#548af7" stroke-width="1" stroke-linecap="round"/></svg>
<div style="position:absolute;left:593.3px;top:1487.0px;line-height:36px;height:36px;font-size:19px;color:#9da0a8;font-weight:normal;font-family:'Liberation Sans', sans-serif;white-space:pre;">stu_v_1</div>
<div style="position:absolute;left:2383px;top:1487.0px;line-height:36px;height:36px;font-size:19px;color:#9da0a8;font-weight:normal;font-family:'Liberation Sans', sans-serif;white-space:pre;">SUM: <span style="font-size:18px">值不足</span></div>
<svg style="position:absolute;left:2512.0px;top:1493.0px;" width="24" height="24" viewBox="0 0 16 16" fill="none"><rect x="2.5" y="7.5" width="9" height="7" rx="1.5" stroke="#9da0a8" stroke-width="1" stroke-linecap="round" stroke-linejoin="round"/><path d="M9 7.5 V4.5 Q9 2 11.5 2 Q14 2 14 4.5 V5.5" stroke="#9da0a8" stroke-width="1" stroke-linecap="round" stroke-linejoin="round"/><path d="M7 10 V12" stroke="#9da0a8" stroke-width="1" stroke-linecap="round" stroke-linejoin="round"/></svg>
</body></html>
